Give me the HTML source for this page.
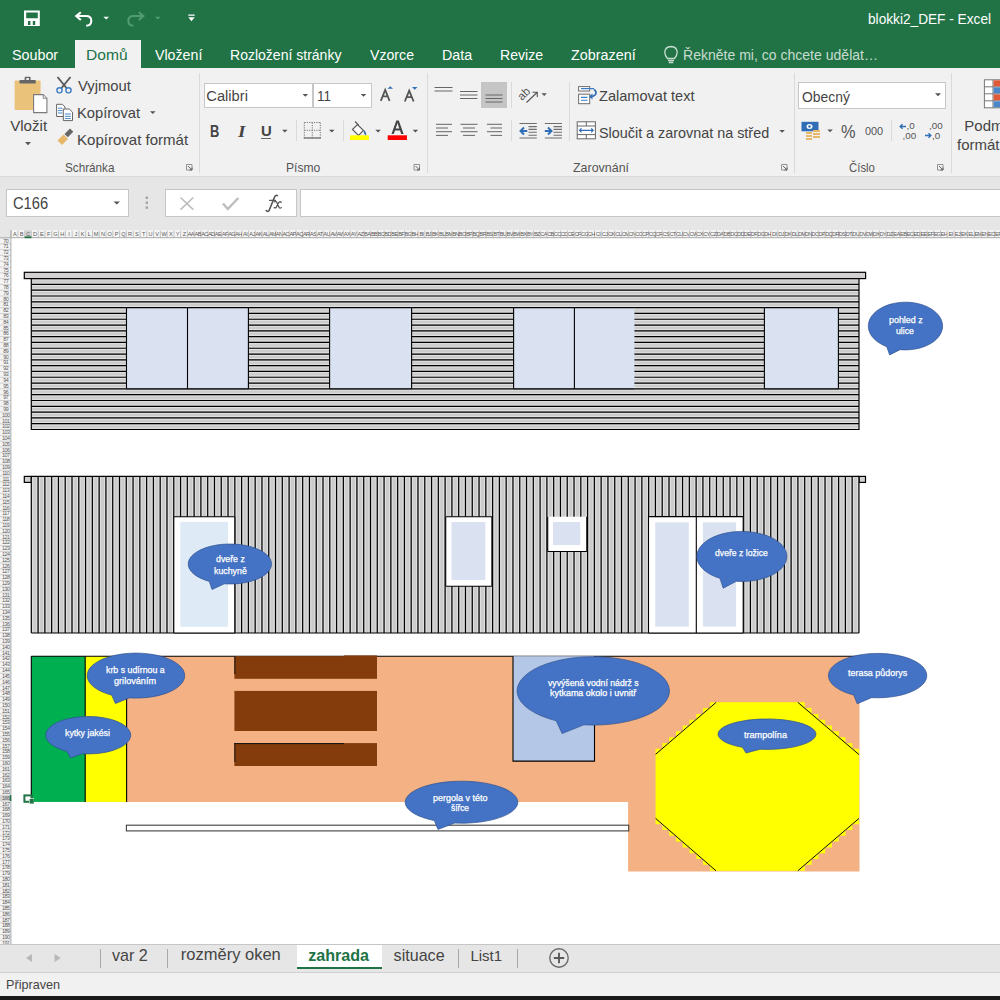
<!DOCTYPE html><html><head><meta charset="utf-8"><style>
html,body{margin:0;padding:0;width:1000px;height:1000px;overflow:hidden;background:#fff;font-family:"Liberation Sans",sans-serif}
.t{position:absolute;white-space:nowrap;line-height:normal}
.r{position:absolute}
svg{position:absolute;left:0;top:0;overflow:visible}
</style></head><body>
<div class="r" style="left:0.00px;top:0.00px;width:1000.00px;height:68.40px;background:#217346;"></div>
<div class="r" style="left:74.80px;top:39.80px;width:66.00px;height:28.60px;background:#f1f1f1;"></div>
<div class="r" style="left:0.00px;top:68.40px;width:1000.00px;height:107.80px;background:#f1f1f1;"></div>
<div class="r" style="left:0.00px;top:175.80px;width:1000.00px;height:1.00px;background:#d9d9d9;"></div>
<div class="r" style="left:0.00px;top:176.80px;width:1000.00px;height:53.20px;background:#e6e6e6;"></div>
<div class="t" style="left:867.70px;top:11.39px;font-size:14.6px;color:#ffffff;font-weight:400;transform:scaleX(0.9364);transform-origin:0 0;">blokki2_DEF - Excel</div>
<svg width="1000" height="40">
<path d="M24 10.6h15.8v15.4H24z M26.2 12.4v5.8h11.6v-5.8z M28 21v4h2.4v-4z M32.8 21v4h2.4v-4z" fill="#fff" fill-rule="evenodd"/>
<path d="M80.8 12.2 L76.2 16 L80.8 20" fill="none" stroke="#fff" stroke-width="2.1" stroke-linejoin="miter"/>
<path d="M76.8 16 H86 Q91.3 16 91.3 20.8 Q91.3 25.6 86.2 25.8" fill="none" stroke="#fff" stroke-width="2.1"/>
<path d="M103.4 16.8h5.6l-2.8 2.8z" fill="#fff"/>
<path d="M138.8 12.2 L143.4 16 L138.8 20" fill="none" stroke="#519c73" stroke-width="2.1"/>
<path d="M142.8 16 H133.6 Q128.3 16 128.3 20.8 Q128.3 25.6 133.4 25.8" fill="none" stroke="#519c73" stroke-width="2.1"/>
<path d="M155 16.8h5.6l-2.8 2.8z" fill="#519c73"/>
<path d="M188.3 14.5h6.4v1.2h-6.4z M188.3 17.2h6.4l-3.2 4z" fill="#fff"/>
</svg>
<div class="t" style="left:12.00px;top:46.06px;font-size:15.4px;color:#ffffff;font-weight:400;transform:scaleX(0.9292);transform-origin:0 0;">Soubor</div>
<div class="t" style="left:86.19px;top:46.06px;font-size:15.4px;color:#217346;font-weight:400;transform:scaleX(1.0128);transform-origin:0 0;">Domů</div>
<div class="t" style="left:155.20px;top:46.06px;font-size:15.4px;color:#ffffff;font-weight:400;transform:scaleX(0.9220);transform-origin:0 0;">Vložení</div>
<div class="t" style="left:230.29px;top:46.06px;font-size:15.4px;color:#ffffff;font-weight:400;transform:scaleX(0.9110);transform-origin:0 0;">Rozložení stránky</div>
<div class="t" style="left:370.20px;top:46.06px;font-size:15.4px;color:#ffffff;font-weight:400;transform:scaleX(0.9189);transform-origin:0 0;">Vzorce</div>
<div class="t" style="left:441.67px;top:46.06px;font-size:15.4px;color:#ffffff;font-weight:400;transform:scaleX(0.9264);transform-origin:0 0;">Data</div>
<div class="t" style="left:500.09px;top:46.06px;font-size:15.4px;color:#ffffff;font-weight:400;transform:scaleX(0.9146);transform-origin:0 0;">Revize</div>
<div class="t" style="left:570.80px;top:46.06px;font-size:15.4px;color:#ffffff;font-weight:400;transform:scaleX(0.9326);transform-origin:0 0;">Zobrazení</div>
<svg width="1000" height="70"><g fill="none" stroke="#c7dccf" stroke-width="1.3"><path d="M667.5 58.5 Q664.8 55.5 664.8 52.3 Q665 46.8 671 46.5 Q677 46.8 677.2 52.3 Q677.2 55.5 674.5 58.5 Z"/><path d="M668 60.5h6 M668.8 62.5h4.4"/></g></svg>
<div class="t" style="left:683.09px;top:46.06px;font-size:15.4px;color:#c7dccf;font-weight:400;transform:scaleX(0.9117);transform-origin:0 0;">Řekněte mi, co chcete udělat…</div>
<div class="r" style="left:198.80px;top:72.50px;width:1.00px;height:100.00px;background:#dadada;"></div>
<div class="r" style="left:426.50px;top:72.50px;width:1.00px;height:100.00px;background:#dadada;"></div>
<div class="r" style="left:794.30px;top:72.50px;width:1.00px;height:100.00px;background:#dadada;"></div>
<div class="r" style="left:950.60px;top:72.50px;width:1.00px;height:100.00px;background:#dadada;"></div>
<div class="r" style="left:296.00px;top:120.00px;width:1.00px;height:21.00px;background:#dadada;"></div>
<div class="r" style="left:342.60px;top:120.00px;width:1.00px;height:21.00px;background:#dadada;"></div>
<div class="r" style="left:511.20px;top:82.00px;width:1.00px;height:26.00px;background:#dadada;"></div>
<div class="r" style="left:511.20px;top:120.00px;width:1.00px;height:21.00px;background:#dadada;"></div>
<div class="r" style="left:569.40px;top:82.00px;width:1.00px;height:59.00px;background:#dadada;"></div>
<div class="r" style="left:890.80px;top:120.00px;width:1.00px;height:21.00px;background:#dadada;"></div>
<svg width="1000" height="180">
<rect x="14.6" y="80.4" width="26" height="29.6" rx="1" fill="#ebc27a"/>
<rect x="19.4" y="80" width="16.4" height="3.6" rx="1" fill="#666"/>
<rect x="24.6" y="76.8" width="6" height="4" rx="1" fill="#666"/><rect x="26.3" y="78" width="2.6" height="2" fill="#f1f1f1"/>
<path d="M33.6 94.6h9.6l3.7 3.7v14.3h-13.3z" fill="#fff" stroke="#7a7a7a" stroke-width="1.1"/>
<path d="M43.2 94.6v3.7h3.7" fill="#ddd" stroke="#7a7a7a" stroke-width="0.8"/>
<path d="M25 142h6l-3 3.2z" fill="#555"/>
<path d="M57.5 77 L66.5 88 M70.5 77 L61.5 88" stroke="#555" stroke-width="1.8" fill="none"/>
<circle cx="59.5" cy="90.3" r="2.6" fill="none" stroke="#3b7bc4" stroke-width="1.4"/><circle cx="68.5" cy="90.3" r="2.6" fill="none" stroke="#3b7bc4" stroke-width="1.4"/>
<path d="M56.6 104.3h5.8l2.6 2.6v9.6h-8.4z" fill="#fff" stroke="#666" stroke-width="1"/>
<path d="M63.3 109h6l3.2 3.2v8.4h-9.2z" fill="#fff" stroke="#666" stroke-width="1"/>
<path d="M58 108.2h4.4 M58 110.6h4.4 M58 113h4.4 M64.8 114h6 M64.8 116.3h6 M64.8 118.6h6" stroke="#4a86c8" stroke-width="1"/>
<path d="M57.5 140.5 L63.5 134.5 L68 139 L62 145 Z" fill="#e8b86a"/>
<path d="M64.5 134 L70 128.5 L73.3 131.8 L67.8 137.3 Z" fill="#666"/>
<path d="M186.5 164.5h5.5v5.5h-5.5z" fill="none" stroke="#888" stroke-width="0.9"/><path d="M188.0 166l4 4 M192.0 167.5v2.5h-2.5" stroke="#666" stroke-width="1" fill="none"/>
<path d="M414 164.5h5.5v5.5h-5.5z" fill="none" stroke="#888" stroke-width="0.9"/><path d="M415.5 166l4 4 M419.5 167.5v2.5h-2.5" stroke="#666" stroke-width="1" fill="none"/>
<path d="M781.5 164.5h5.5v5.5h-5.5z" fill="none" stroke="#888" stroke-width="0.9"/><path d="M783.0 166l4 4 M787.0 167.5v2.5h-2.5" stroke="#666" stroke-width="1" fill="none"/>
<path d="M937.5 164.5h5.5v5.5h-5.5z" fill="none" stroke="#888" stroke-width="0.9"/><path d="M939.0 166l4 4 M943.0 167.5v2.5h-2.5" stroke="#666" stroke-width="1" fill="none"/>
</svg>
<div class="t" style="left:10.20px;top:117.13px;font-size:15.1px;color:#444444;font-weight:400;">Vložit</div>
<div class="t" style="left:78.00px;top:77.81px;font-size:14.8px;color:#444444;font-weight:400;">Vyjmout</div>
<div class="t" style="left:77.00px;top:105.01px;font-size:14.8px;color:#444444;font-weight:400;transform:scaleX(0.9964);transform-origin:0 0;">Kopírovat</div>
<svg width="1000" height="180"><path d="M150 111.3h5.6l-2.8 2.8z" fill="#555"/></svg>
<div class="t" style="left:76.98px;top:132.01px;font-size:14.8px;color:#444444;font-weight:400;transform:scaleX(1.0160);transform-origin:0 0;">Kopírovat formát</div>
<div class="t" style="left:65.00px;top:159.96px;font-size:13.3px;color:#555;font-weight:400;transform:scaleX(0.8806);transform-origin:0 0;">Schránka</div>
<div class="r" style="left:203.9px;top:82.5px;width:109.3px;height:25.8px;background:#fff;border:1px solid #c6c6c6;box-sizing:border-box"></div>
<div class="r" style="left:313.4px;top:82.5px;width:58.3px;height:25.8px;background:#fff;border:1px solid #c6c6c6;box-sizing:border-box"></div>
<div class="t" style="left:206.30px;top:87.50px;font-size:14.7px;color:#444444;font-weight:400;">Calibri</div>
<div class="t" style="left:317.48px;top:87.50px;font-size:14.7px;color:#444444;font-weight:400;transform:scaleX(0.9164);transform-origin:0 0;">11</div>
<svg width="1000" height="180">
<path d="M302.5 94h5.6l-2.8 2.8z M360.7 94h5.6l-2.8 2.8z" fill="#555"/>
<path d="M380.8 100.8 L385.2 89.8 L389.6 100.8 M382.4 96.4 H388" stroke="#555" stroke-width="1.8" fill="none"/>
<path d="M387.5 88.8 L390.2 86.2 L393 88.8 Z" fill="#2f6db5"/>
<path d="M404.8 101.5 L409.2 90.7 L413.6 101.5 M406.4 97.1 H412" stroke="#555" stroke-width="1.8" fill="none"/>
<path d="M412 87 L417.5 87 L414.75 89.75 Z" fill="#2f6db5"/>
<path d="M282 129.8h5.6l-2.8 2.8z M329 129.8h5.6l-2.8 2.8z M375.3 129.8h5.6l-2.8 2.8z M412.6 129.8h5.6l-2.8 2.8z" fill="#555"/>
<g stroke="#777" stroke-width="1" fill="none" stroke-dasharray="1.2 1.2"><path d="M304.3 122.5h16 M304.3 130.3h16 M304.3 122.5v16 M312.3 122.5v16 M320.3 122.5v16"/></g>
<path d="M303.8 138h17" stroke="#666" stroke-width="1.3"/>
<path d="M352.5 129.5 L357.5 124.5 L363.5 130.5 L358.5 135.5 Z" fill="#fff" stroke="#555" stroke-width="1.1"/>
<path d="M355 121.5 L358.5 125" stroke="#555" stroke-width="1.1"/>
<path d="M364 130 Q367 133 366 136 Q364 134 363.5 131z" fill="#2f6db5"/>
<rect x="350" y="135.3" width="19" height="4.7" fill="#ffff00"/>
<path d="M391.5 134 L396.3 120.5 L398.8 120.5 L403.6 134 L401.2 134 L400 130.4 L395 130.4 L393.8 134 Z M395.7 128.4 L399.3 128.4 L397.5 123 Z" fill="#444" fill-rule="evenodd"/>
<rect x="387.7" y="135.3" width="19.3" height="4.7" fill="#ff0000"/>
</svg>
<div class="t" style="left:210.21px;top:121.75px;font-size:16.3px;color:#444;font-weight:700;transform:scaleX(0.7909);transform-origin:0 0;">B</div>
<div class="t" style="left:238.48px;top:121.75px;font-size:16.3px;color:#444;font-weight:700;transform:scaleX(1.1750);transform-origin:0 0;font-style:italic;font-family:'Liberation Serif',serif">I</div>
<div class="t" style="left:260.80px;top:121.77px;font-size:15.5px;color:#444;font-weight:700;transform:scaleX(0.9636);transform-origin:0 0;">U</div>
<div class="r" style="left:260.80px;top:137.60px;width:10.60px;height:1.20px;background:#666;"></div>
<div class="t" style="left:286.09px;top:159.76px;font-size:13.3px;color:#555;font-weight:400;transform:scaleX(0.9094);transform-origin:0 0;">Písmo</div>
<div class="r" style="left:481.20px;top:82.00px;width:25.50px;height:26.40px;background:#c5c5c5;"></div>
<svg width="1000" height="180"><g stroke="#666" stroke-width="1" fill="none">
<path d="M434.5 87.5H452.5 M434.5 91H452.5 "/>
<path d="M460 91.5H477.5 M460 95H477.5 M460 98.5H477.5 "/>
<path d="M485.5 95H502.5 M485.5 98.5H502.5 M485.5 102H502.5 "/>
<path d="M436 124.3H452 M436 128H448 M436 131.7H452 M436 135.4H448"/>
<path d="M460.6 124.3H477.5 M463 128H475 M460.6 131.7H477.5 M463 135.4H475"/>
<path d="M486.9 124.3H502 M490.5 128H502 M486.9 131.7H502 M490.5 135.4H502"/>
</g>
<path d="M519.5 123.5H536.8 M528.5 126.6H536.8 M528.5 129.4H536.8 M528.5 132.3H536.8 M528.5 135.2H536.8 M519.5 138H536.8" stroke="#6e6e6e" stroke-width="1.1"/>
<path d="M544.8 123.5H562 M553.5 126.6H562 M553.5 129.4H562 M553.5 132.3H562 M553.5 135.2H562 M544.8 138H562" stroke="#6e6e6e" stroke-width="1.1"/>
<path d="M527.3 131H521 M524 127.5L520.5 131L524 134.5" stroke="#2f6db5" stroke-width="2" fill="none"/>
<path d="M544.8 131H551 M548 127.5L551.5 131L548 134.5" stroke="#2f6db5" stroke-width="2" fill="none"/>
<text x="0" y="0" font-family="Liberation Sans" font-size="11.5" fill="#555" transform="translate(522 101) rotate(-45)">ab</text>
<path d="M526.5 102.5 L537 92.5 M532.5 92.3h4.8v4.8" stroke="#555" stroke-width="1.1" fill="none"/>
<path d="M541.5 93.3h5.4l-2.7 2.7z M779.3 130h5.6l-2.8 2.8z" fill="#555"/>
<rect x="578.6" y="86.6" width="11.1" height="4.4" fill="#fff" stroke="#6e6e6e" stroke-width="1"/>
<rect x="578.6" y="94.2" width="11.1" height="9.5" fill="#fff" stroke="#6e6e6e" stroke-width="1"/>
<path d="M581 88.6H594 M581 97.4H587.5 M581 100.2H587.5" stroke="#3b7bc4" stroke-width="1.1"/>
<path d="M594 89.5 Q597 91.5 595.5 94.5 Q594 96.5 591 96.5" stroke="#2f6db5" stroke-width="1.7" fill="none"/>
<path d="M592.5 93.5 L589 96.6 L592.5 99.5 Z" fill="#2f6db5"/>
<rect x="577.2" y="121.8" width="18.2" height="17" fill="#fff" stroke="#666" stroke-width="1"/>
<path d="M577.2 126h18.2 M577.2 134.6h18.2 M586.3 121.8v4.2 M586.3 134.6v4.2" stroke="#666" stroke-width="1"/>
<path d="M579.5 130.3h13.6 M581.5 128.3l-2 2 2 2 M591.2 128.3l2 2-2 2" stroke="#2f6db5" stroke-width="1.2" fill="none"/>
</svg>
<div class="t" style="left:599.40px;top:86.92px;font-size:15.0px;color:#444444;font-weight:400;transform:scaleX(0.9707);transform-origin:0 0;">Zalamovat text</div>
<div class="t" style="left:599.40px;top:123.62px;font-size:15.0px;color:#444444;font-weight:400;transform:scaleX(0.9579);transform-origin:0 0;">Sloučit a zarovnat na střed</div>
<div class="t" style="left:573.10px;top:159.96px;font-size:13.3px;color:#555;font-weight:400;transform:scaleX(0.9356);transform-origin:0 0;">Zarovnání</div>
<div class="r" style="left:798.4px;top:82.4px;width:147.4px;height:26.2px;background:#fff;border:1px solid #c6c6c6;box-sizing:border-box"></div>
<div class="t" style="left:801.50px;top:88.12px;font-size:15.0px;color:#444444;font-weight:400;transform:scaleX(0.9254);transform-origin:0 0;">Obecný</div>
<svg width="1000" height="180">
<path d="M935 93.3h6l-3 3z M827.4 129.5h5.4l-2.7 2.7z" fill="#555"/>
<rect x="801.5" y="121.8" width="17" height="9.5" fill="#2f6db5"/><ellipse cx="809.5" cy="126.5" rx="3" ry="2.5" fill="#fff"/><circle cx="809.5" cy="126.5" r="1.2" fill="#2f6db5"/>
<path d="M806 132h6v2h-6z M806 135h6v2h-6z M806 138h6v2h-6z M813 130h7v2h-7z M813 133h7v2h-7z M813 136h7v2h-7z" fill="#e8b86a"/>
<path d="M906 126.5h-5 M902.5 124.3l-2.3 2.2 2.3 2.2" stroke="#2f6db5" stroke-width="1.4" fill="none"/>
<path d="M925 135.5h5 M928.5 133.3l2.3 2.2-2.3 2.2" stroke="#2f6db5" stroke-width="1.4" fill="none"/>
</svg>
<div class="t" style="left:841.40px;top:120.61px;font-size:19.0px;color:#555;font-weight:400;transform:scaleX(0.8588);transform-origin:0 0;">%</div>
<div class="t" style="left:864.50px;top:125.07px;font-size:11.3px;color:#555;font-weight:400;transform:scaleX(0.9641);transform-origin:0 0;">000</div>
<div class="t" style="left:906.50px;top:120.43px;font-size:9.8px;color:#555;font-weight:400;">,0</div>
<div class="t" style="left:902.50px;top:130.43px;font-size:9.8px;color:#555;font-weight:400;">,00</div>
<div class="t" style="left:929.00px;top:120.43px;font-size:9.8px;color:#555;font-weight:400;">,00</div>
<div class="t" style="left:932.00px;top:130.43px;font-size:9.8px;color:#555;font-weight:400;">,0</div>
<div class="t" style="left:849.40px;top:159.96px;font-size:13.3px;color:#555;font-weight:400;transform:scaleX(0.8562);transform-origin:0 0;">Číslo</div>
<svg width="1000" height="180"><rect x="984.4" y="79.8" width="20" height="28" fill="#fff" stroke="#777" stroke-width="1"/>
<path d="M984.4 86.8h20 M984.4 93.8h20 M984.4 100.8h20 M993 79.8v28" stroke="#777" stroke-width="1"/>
<rect x="993.5" y="80.3" width="7" height="6" fill="#e05a3a"/><rect x="993.5" y="87.3" width="7" height="6" fill="#4a86c8"/><rect x="993.5" y="94.3" width="7" height="6" fill="#e05a3a"/><rect x="993.5" y="101.3" width="7" height="6" fill="#4a86c8"/></svg>
<div class="t" style="left:964.30px;top:117.42px;font-size:15.0px;color:#444444;font-weight:400;">Podm</div>
<div class="t" style="left:957.00px;top:136.43px;font-size:15.0px;color:#444444;font-weight:400;">formát</div>
<div class="r" style="left:6.4px;top:189.2px;width:122.2px;height:28.2px;background:#fff;border:1px solid #c6c6c6;box-sizing:border-box"></div>
<div class="t" style="left:12.80px;top:194.52px;font-size:16.0px;color:#444444;font-weight:400;transform:scaleX(0.9178);transform-origin:0 0;">C166</div>
<div class="r" style="left:165.4px;top:189.2px;width:131.6px;height:28.2px;background:#fff;border:1px solid #c6c6c6;box-sizing:border-box"></div>
<div class="r" style="left:300.2px;top:189.2px;width:710px;height:28.2px;background:#fff;border:1px solid #c6c6c6;box-sizing:border-box"></div>
<svg width="1000" height="240">
<path d="M113.6 201.4h6.4l-3.2 3.2z" fill="#555"/>
<rect x="145.6" y="196.6" width="2.4" height="2.4" fill="#a3a3a3"/><rect x="145.6" y="201.5" width="2.4" height="2.4" fill="#a3a3a3"/><rect x="145.6" y="206.4" width="2.4" height="2.4" fill="#a3a3a3"/>
<path d="M180.5 197.5l12.8 12.2 M193.3 197.5L180.5 209.7" stroke="#bdbdbd" stroke-width="1.6"/>
<path d="M223 203.5l4.8 5.5 10.5-11" stroke="#bdbdbd" stroke-width="2.4" fill="none"/>
</svg>
<svg width="1000" height="240"><g fill="none" stroke="#555" stroke-linecap="round"><path d="M266.2 210.6 Q267.6 212.4 269.2 210.2 L274.3 197.6 Q275.4 194.6 277.4 195.6" stroke-width="1.6"/><path d="M269.6 200.4 H275.4" stroke-width="1.2"/><path d="M274.6 201.8 Q276.2 200.8 277.1 203 L278.9 207 Q279.9 209 281.3 207.6 M281.2 202.2 Q279.6 201 278.4 203 L276.6 206.6 Q275.6 208.6 274.2 207.6" stroke-width="1.3"/></g></svg>
<div class="r" style="left:0.00px;top:230.00px;width:1000.00px;height:8.00px;background:#f4f4f4;"></div>
<div class="r" style="left:0.00px;top:230.00px;width:11.10px;height:8.00px;background:#e6e6e6;"></div>
<div class="r" style="left:0.00px;top:238.00px;width:11.10px;height:706.40px;background:#f4f4f4;"></div>
<svg width="1000" height="1000">
<path d="M11.10 230.5V238M17.88 230.5V238M24.67 230.5V238M31.45 230.5V238M38.24 230.5V238M45.02 230.5V238M51.80 230.5V238M58.59 230.5V238M65.37 230.5V238M72.16 230.5V238M78.94 230.5V238M85.72 230.5V238M92.51 230.5V238M99.29 230.5V238M106.08 230.5V238M112.86 230.5V238M119.64 230.5V238M126.43 230.5V238M133.21 230.5V238M140.00 230.5V238M146.78 230.5V238M153.56 230.5V238M160.35 230.5V238M167.13 230.5V238M173.92 230.5V238M180.70 230.5V238M187.48 230.5V238M194.27 230.5V238M201.05 230.5V238M207.84 230.5V238M214.62 230.5V238M221.40 230.5V238M228.19 230.5V238M234.97 230.5V238M241.76 230.5V238M248.54 230.5V238M255.32 230.5V238M262.11 230.5V238M268.89 230.5V238M275.68 230.5V238M282.46 230.5V238M289.24 230.5V238M296.03 230.5V238M302.81 230.5V238M309.60 230.5V238M316.38 230.5V238M323.16 230.5V238M329.95 230.5V238M336.73 230.5V238M343.52 230.5V238M350.30 230.5V238M357.08 230.5V238M363.87 230.5V238M370.65 230.5V238M377.44 230.5V238M384.22 230.5V238M391.00 230.5V238M397.79 230.5V238M404.57 230.5V238M411.36 230.5V238M418.14 230.5V238M424.92 230.5V238M431.71 230.5V238M438.49 230.5V238M445.28 230.5V238M452.06 230.5V238M458.84 230.5V238M465.63 230.5V238M472.41 230.5V238M479.20 230.5V238M485.98 230.5V238M492.76 230.5V238M499.55 230.5V238M506.33 230.5V238M513.12 230.5V238M519.90 230.5V238M526.68 230.5V238M533.47 230.5V238M540.25 230.5V238M547.04 230.5V238M553.82 230.5V238M560.60 230.5V238M567.39 230.5V238M574.17 230.5V238M580.96 230.5V238M587.74 230.5V238M594.52 230.5V238M601.31 230.5V238M608.09 230.5V238M614.88 230.5V238M621.66 230.5V238M628.44 230.5V238M635.23 230.5V238M642.01 230.5V238M648.80 230.5V238M655.58 230.5V238M662.36 230.5V238M669.15 230.5V238M675.93 230.5V238M682.72 230.5V238M689.50 230.5V238M696.28 230.5V238M703.07 230.5V238M709.85 230.5V238M716.64 230.5V238M723.42 230.5V238M730.20 230.5V238M736.99 230.5V238M743.77 230.5V238M750.56 230.5V238M757.34 230.5V238M764.12 230.5V238M770.91 230.5V238M777.69 230.5V238M784.48 230.5V238M791.26 230.5V238M798.04 230.5V238M804.83 230.5V238M811.61 230.5V238M818.40 230.5V238M825.18 230.5V238M831.96 230.5V238M838.75 230.5V238M845.53 230.5V238M852.32 230.5V238M859.10 230.5V238M865.88 230.5V238M872.67 230.5V238M879.45 230.5V238M886.24 230.5V238M893.02 230.5V238M899.80 230.5V238M906.59 230.5V238M913.37 230.5V238M920.16 230.5V238M926.94 230.5V238M933.72 230.5V238M940.51 230.5V238M947.29 230.5V238M954.08 230.5V238M960.86 230.5V238M967.64 230.5V238M974.43 230.5V238M981.21 230.5V238M988.00 230.5V238M994.78 230.5V238" stroke="#bcbcbc" stroke-width="0.9"/>
<rect x="24.67" y="230.2" width="6.78" height="7.8" fill="#d4d4d4"/>
<path d="M0 237.7H1000" stroke="#ababab" stroke-width="1"/>
<rect x="24.67" y="236.4" width="6.78" height="1.8" fill="#217346"/>
<path d="M0 238.00H11.1M0 243.80H11.1M0 249.61H11.1M0 255.41H11.1M0 261.22H11.1M0 267.02H11.1M0 272.82H11.1M0 278.63H11.1M0 284.43H11.1M0 290.24H11.1M0 296.04H11.1M0 301.84H11.1M0 307.65H11.1M0 313.45H11.1M0 319.26H11.1M0 325.06H11.1M0 330.86H11.1M0 336.67H11.1M0 342.47H11.1M0 348.28H11.1M0 354.08H11.1M0 359.88H11.1M0 365.69H11.1M0 371.49H11.1M0 377.30H11.1M0 383.10H11.1M0 388.90H11.1M0 394.71H11.1M0 400.51H11.1M0 406.32H11.1M0 412.12H11.1M0 417.92H11.1M0 423.73H11.1M0 429.53H11.1M0 435.34H11.1M0 441.14H11.1M0 446.94H11.1M0 452.75H11.1M0 458.55H11.1M0 464.36H11.1M0 470.16H11.1M0 475.96H11.1M0 481.77H11.1M0 487.57H11.1M0 493.38H11.1M0 499.18H11.1M0 504.98H11.1M0 510.79H11.1M0 516.59H11.1M0 522.40H11.1M0 528.20H11.1M0 534.00H11.1M0 539.81H11.1M0 545.61H11.1M0 551.42H11.1M0 557.22H11.1M0 563.02H11.1M0 568.83H11.1M0 574.63H11.1M0 580.44H11.1M0 586.24H11.1M0 592.04H11.1M0 597.85H11.1M0 603.65H11.1M0 609.46H11.1M0 615.26H11.1M0 621.06H11.1M0 626.87H11.1M0 632.67H11.1M0 638.48H11.1M0 644.28H11.1M0 650.08H11.1M0 655.89H11.1M0 661.69H11.1M0 667.50H11.1M0 673.30H11.1M0 679.10H11.1M0 684.91H11.1M0 690.71H11.1M0 696.52H11.1M0 702.32H11.1M0 708.12H11.1M0 713.93H11.1M0 719.73H11.1M0 725.54H11.1M0 731.34H11.1M0 737.14H11.1M0 742.95H11.1M0 748.75H11.1M0 754.56H11.1M0 760.36H11.1M0 766.16H11.1M0 771.97H11.1M0 777.77H11.1M0 783.58H11.1M0 789.38H11.1M0 795.18H11.1M0 800.99H11.1M0 806.79H11.1M0 812.60H11.1M0 818.40H11.1M0 824.20H11.1M0 830.01H11.1M0 835.81H11.1M0 841.62H11.1M0 847.42H11.1M0 853.22H11.1M0 859.03H11.1M0 864.83H11.1M0 870.64H11.1M0 876.44H11.1M0 882.24H11.1M0 888.05H11.1M0 893.85H11.1M0 899.66H11.1M0 905.46H11.1M0 911.26H11.1M0 917.07H11.1M0 922.87H11.1M0 928.68H11.1M0 934.48H11.1M0 940.28H11.1" stroke="#c8c8c8" stroke-width="0.8"/>
<path d="M10.90 230V944.4" stroke="#ababab" stroke-width="1"/>
<rect x="0" y="795.18" width="11.10" height="5.80" fill="#d4d4d4"/>
<rect x="9.70" y="795.18" width="1.6" height="5.80" fill="#217346"/>
</svg>
<div style="position:absolute;left:0;top:0;width:1000px;height:238px;overflow:hidden">
<div class="t" style="left:11.10px;width:6.78px;text-align:center;top:230.6px;font-size:5.6px;letter-spacing:-0.6px;color:#5a5a5a;overflow:hidden">A</div>
<div class="t" style="left:17.88px;width:6.78px;text-align:center;top:230.6px;font-size:5.6px;letter-spacing:-0.6px;color:#5a5a5a;overflow:hidden">B</div>
<div class="t" style="left:24.67px;width:6.78px;text-align:center;top:230.6px;font-size:5.6px;letter-spacing:-0.6px;color:#5a5a5a;overflow:hidden">C</div>
<div class="t" style="left:31.45px;width:6.78px;text-align:center;top:230.6px;font-size:5.6px;letter-spacing:-0.6px;color:#5a5a5a;overflow:hidden">D</div>
<div class="t" style="left:38.24px;width:6.78px;text-align:center;top:230.6px;font-size:5.6px;letter-spacing:-0.6px;color:#5a5a5a;overflow:hidden">E</div>
<div class="t" style="left:45.02px;width:6.78px;text-align:center;top:230.6px;font-size:5.6px;letter-spacing:-0.6px;color:#5a5a5a;overflow:hidden">F</div>
<div class="t" style="left:51.80px;width:6.78px;text-align:center;top:230.6px;font-size:5.6px;letter-spacing:-0.6px;color:#5a5a5a;overflow:hidden">G</div>
<div class="t" style="left:58.59px;width:6.78px;text-align:center;top:230.6px;font-size:5.6px;letter-spacing:-0.6px;color:#5a5a5a;overflow:hidden">H</div>
<div class="t" style="left:65.37px;width:6.78px;text-align:center;top:230.6px;font-size:5.6px;letter-spacing:-0.6px;color:#5a5a5a;overflow:hidden">I</div>
<div class="t" style="left:72.16px;width:6.78px;text-align:center;top:230.6px;font-size:5.6px;letter-spacing:-0.6px;color:#5a5a5a;overflow:hidden">J</div>
<div class="t" style="left:78.94px;width:6.78px;text-align:center;top:230.6px;font-size:5.6px;letter-spacing:-0.6px;color:#5a5a5a;overflow:hidden">K</div>
<div class="t" style="left:85.72px;width:6.78px;text-align:center;top:230.6px;font-size:5.6px;letter-spacing:-0.6px;color:#5a5a5a;overflow:hidden">L</div>
<div class="t" style="left:92.51px;width:6.78px;text-align:center;top:230.6px;font-size:5.6px;letter-spacing:-0.6px;color:#5a5a5a;overflow:hidden">M</div>
<div class="t" style="left:99.29px;width:6.78px;text-align:center;top:230.6px;font-size:5.6px;letter-spacing:-0.6px;color:#5a5a5a;overflow:hidden">N</div>
<div class="t" style="left:106.08px;width:6.78px;text-align:center;top:230.6px;font-size:5.6px;letter-spacing:-0.6px;color:#5a5a5a;overflow:hidden">O</div>
<div class="t" style="left:112.86px;width:6.78px;text-align:center;top:230.6px;font-size:5.6px;letter-spacing:-0.6px;color:#5a5a5a;overflow:hidden">P</div>
<div class="t" style="left:119.64px;width:6.78px;text-align:center;top:230.6px;font-size:5.6px;letter-spacing:-0.6px;color:#5a5a5a;overflow:hidden">Q</div>
<div class="t" style="left:126.43px;width:6.78px;text-align:center;top:230.6px;font-size:5.6px;letter-spacing:-0.6px;color:#5a5a5a;overflow:hidden">R</div>
<div class="t" style="left:133.21px;width:6.78px;text-align:center;top:230.6px;font-size:5.6px;letter-spacing:-0.6px;color:#5a5a5a;overflow:hidden">S</div>
<div class="t" style="left:140.00px;width:6.78px;text-align:center;top:230.6px;font-size:5.6px;letter-spacing:-0.6px;color:#5a5a5a;overflow:hidden">T</div>
<div class="t" style="left:146.78px;width:6.78px;text-align:center;top:230.6px;font-size:5.6px;letter-spacing:-0.6px;color:#5a5a5a;overflow:hidden">U</div>
<div class="t" style="left:153.56px;width:6.78px;text-align:center;top:230.6px;font-size:5.6px;letter-spacing:-0.6px;color:#5a5a5a;overflow:hidden">V</div>
<div class="t" style="left:160.35px;width:6.78px;text-align:center;top:230.6px;font-size:5.6px;letter-spacing:-0.6px;color:#5a5a5a;overflow:hidden">W</div>
<div class="t" style="left:167.13px;width:6.78px;text-align:center;top:230.6px;font-size:5.6px;letter-spacing:-0.6px;color:#5a5a5a;overflow:hidden">X</div>
<div class="t" style="left:173.92px;width:6.78px;text-align:center;top:230.6px;font-size:5.6px;letter-spacing:-0.6px;color:#5a5a5a;overflow:hidden">Y</div>
<div class="t" style="left:180.70px;width:6.78px;text-align:center;top:230.6px;font-size:5.6px;letter-spacing:-0.6px;color:#5a5a5a;overflow:hidden">Z</div>
<div class="t" style="left:187.48px;width:6.78px;text-align:center;top:230.6px;font-size:5.6px;letter-spacing:-0.6px;color:#5a5a5a;overflow:hidden">AA</div>
<div class="t" style="left:194.27px;width:6.78px;text-align:center;top:230.6px;font-size:5.6px;letter-spacing:-0.6px;color:#5a5a5a;overflow:hidden">AB</div>
<div class="t" style="left:201.05px;width:6.78px;text-align:center;top:230.6px;font-size:5.6px;letter-spacing:-0.6px;color:#5a5a5a;overflow:hidden">AC</div>
<div class="t" style="left:207.84px;width:6.78px;text-align:center;top:230.6px;font-size:5.6px;letter-spacing:-0.6px;color:#5a5a5a;overflow:hidden">AD</div>
<div class="t" style="left:214.62px;width:6.78px;text-align:center;top:230.6px;font-size:5.6px;letter-spacing:-0.6px;color:#5a5a5a;overflow:hidden">AE</div>
<div class="t" style="left:221.40px;width:6.78px;text-align:center;top:230.6px;font-size:5.6px;letter-spacing:-0.6px;color:#5a5a5a;overflow:hidden">AF</div>
<div class="t" style="left:228.19px;width:6.78px;text-align:center;top:230.6px;font-size:5.6px;letter-spacing:-0.6px;color:#5a5a5a;overflow:hidden">AG</div>
<div class="t" style="left:234.97px;width:6.78px;text-align:center;top:230.6px;font-size:5.6px;letter-spacing:-0.6px;color:#5a5a5a;overflow:hidden">AH</div>
<div class="t" style="left:241.76px;width:6.78px;text-align:center;top:230.6px;font-size:5.6px;letter-spacing:-0.6px;color:#5a5a5a;overflow:hidden">AI</div>
<div class="t" style="left:248.54px;width:6.78px;text-align:center;top:230.6px;font-size:5.6px;letter-spacing:-0.6px;color:#5a5a5a;overflow:hidden">AJ</div>
<div class="t" style="left:255.32px;width:6.78px;text-align:center;top:230.6px;font-size:5.6px;letter-spacing:-0.6px;color:#5a5a5a;overflow:hidden">AK</div>
<div class="t" style="left:262.11px;width:6.78px;text-align:center;top:230.6px;font-size:5.6px;letter-spacing:-0.6px;color:#5a5a5a;overflow:hidden">AL</div>
<div class="t" style="left:268.89px;width:6.78px;text-align:center;top:230.6px;font-size:5.6px;letter-spacing:-0.6px;color:#5a5a5a;overflow:hidden">AM</div>
<div class="t" style="left:275.68px;width:6.78px;text-align:center;top:230.6px;font-size:5.6px;letter-spacing:-0.6px;color:#5a5a5a;overflow:hidden">AN</div>
<div class="t" style="left:282.46px;width:6.78px;text-align:center;top:230.6px;font-size:5.6px;letter-spacing:-0.6px;color:#5a5a5a;overflow:hidden">AO</div>
<div class="t" style="left:289.24px;width:6.78px;text-align:center;top:230.6px;font-size:5.6px;letter-spacing:-0.6px;color:#5a5a5a;overflow:hidden">AP</div>
<div class="t" style="left:296.03px;width:6.78px;text-align:center;top:230.6px;font-size:5.6px;letter-spacing:-0.6px;color:#5a5a5a;overflow:hidden">AQ</div>
<div class="t" style="left:302.81px;width:6.78px;text-align:center;top:230.6px;font-size:5.6px;letter-spacing:-0.6px;color:#5a5a5a;overflow:hidden">AR</div>
<div class="t" style="left:309.60px;width:6.78px;text-align:center;top:230.6px;font-size:5.6px;letter-spacing:-0.6px;color:#5a5a5a;overflow:hidden">AS</div>
<div class="t" style="left:316.38px;width:6.78px;text-align:center;top:230.6px;font-size:5.6px;letter-spacing:-0.6px;color:#5a5a5a;overflow:hidden">AT</div>
<div class="t" style="left:323.16px;width:6.78px;text-align:center;top:230.6px;font-size:5.6px;letter-spacing:-0.6px;color:#5a5a5a;overflow:hidden">AU</div>
<div class="t" style="left:329.95px;width:6.78px;text-align:center;top:230.6px;font-size:5.6px;letter-spacing:-0.6px;color:#5a5a5a;overflow:hidden">AV</div>
<div class="t" style="left:336.73px;width:6.78px;text-align:center;top:230.6px;font-size:5.6px;letter-spacing:-0.6px;color:#5a5a5a;overflow:hidden">AW</div>
<div class="t" style="left:343.52px;width:6.78px;text-align:center;top:230.6px;font-size:5.6px;letter-spacing:-0.6px;color:#5a5a5a;overflow:hidden">AX</div>
<div class="t" style="left:350.30px;width:6.78px;text-align:center;top:230.6px;font-size:5.6px;letter-spacing:-0.6px;color:#5a5a5a;overflow:hidden">AY</div>
<div class="t" style="left:357.08px;width:6.78px;text-align:center;top:230.6px;font-size:5.6px;letter-spacing:-0.6px;color:#5a5a5a;overflow:hidden">AZ</div>
<div class="t" style="left:363.87px;width:6.78px;text-align:center;top:230.6px;font-size:5.6px;letter-spacing:-0.6px;color:#5a5a5a;overflow:hidden">BA</div>
<div class="t" style="left:370.65px;width:6.78px;text-align:center;top:230.6px;font-size:5.6px;letter-spacing:-0.6px;color:#5a5a5a;overflow:hidden">BB</div>
<div class="t" style="left:377.44px;width:6.78px;text-align:center;top:230.6px;font-size:5.6px;letter-spacing:-0.6px;color:#5a5a5a;overflow:hidden">BC</div>
<div class="t" style="left:384.22px;width:6.78px;text-align:center;top:230.6px;font-size:5.6px;letter-spacing:-0.6px;color:#5a5a5a;overflow:hidden">BD</div>
<div class="t" style="left:391.00px;width:6.78px;text-align:center;top:230.6px;font-size:5.6px;letter-spacing:-0.6px;color:#5a5a5a;overflow:hidden">BE</div>
<div class="t" style="left:397.79px;width:6.78px;text-align:center;top:230.6px;font-size:5.6px;letter-spacing:-0.6px;color:#5a5a5a;overflow:hidden">BF</div>
<div class="t" style="left:404.57px;width:6.78px;text-align:center;top:230.6px;font-size:5.6px;letter-spacing:-0.6px;color:#5a5a5a;overflow:hidden">BG</div>
<div class="t" style="left:411.36px;width:6.78px;text-align:center;top:230.6px;font-size:5.6px;letter-spacing:-0.6px;color:#5a5a5a;overflow:hidden">BH</div>
<div class="t" style="left:418.14px;width:6.78px;text-align:center;top:230.6px;font-size:5.6px;letter-spacing:-0.6px;color:#5a5a5a;overflow:hidden">BI</div>
<div class="t" style="left:424.92px;width:6.78px;text-align:center;top:230.6px;font-size:5.6px;letter-spacing:-0.6px;color:#5a5a5a;overflow:hidden">BJ</div>
<div class="t" style="left:431.71px;width:6.78px;text-align:center;top:230.6px;font-size:5.6px;letter-spacing:-0.6px;color:#5a5a5a;overflow:hidden">BK</div>
<div class="t" style="left:438.49px;width:6.78px;text-align:center;top:230.6px;font-size:5.6px;letter-spacing:-0.6px;color:#5a5a5a;overflow:hidden">BL</div>
<div class="t" style="left:445.28px;width:6.78px;text-align:center;top:230.6px;font-size:5.6px;letter-spacing:-0.6px;color:#5a5a5a;overflow:hidden">BM</div>
<div class="t" style="left:452.06px;width:6.78px;text-align:center;top:230.6px;font-size:5.6px;letter-spacing:-0.6px;color:#5a5a5a;overflow:hidden">BN</div>
<div class="t" style="left:458.84px;width:6.78px;text-align:center;top:230.6px;font-size:5.6px;letter-spacing:-0.6px;color:#5a5a5a;overflow:hidden">BO</div>
<div class="t" style="left:465.63px;width:6.78px;text-align:center;top:230.6px;font-size:5.6px;letter-spacing:-0.6px;color:#5a5a5a;overflow:hidden">BP</div>
<div class="t" style="left:472.41px;width:6.78px;text-align:center;top:230.6px;font-size:5.6px;letter-spacing:-0.6px;color:#5a5a5a;overflow:hidden">BQ</div>
<div class="t" style="left:479.20px;width:6.78px;text-align:center;top:230.6px;font-size:5.6px;letter-spacing:-0.6px;color:#5a5a5a;overflow:hidden">BR</div>
<div class="t" style="left:485.98px;width:6.78px;text-align:center;top:230.6px;font-size:5.6px;letter-spacing:-0.6px;color:#5a5a5a;overflow:hidden">BS</div>
<div class="t" style="left:492.76px;width:6.78px;text-align:center;top:230.6px;font-size:5.6px;letter-spacing:-0.6px;color:#5a5a5a;overflow:hidden">BT</div>
<div class="t" style="left:499.55px;width:6.78px;text-align:center;top:230.6px;font-size:5.6px;letter-spacing:-0.6px;color:#5a5a5a;overflow:hidden">BU</div>
<div class="t" style="left:506.33px;width:6.78px;text-align:center;top:230.6px;font-size:5.6px;letter-spacing:-0.6px;color:#5a5a5a;overflow:hidden">BV</div>
<div class="t" style="left:513.12px;width:6.78px;text-align:center;top:230.6px;font-size:5.6px;letter-spacing:-0.6px;color:#5a5a5a;overflow:hidden">BW</div>
<div class="t" style="left:519.90px;width:6.78px;text-align:center;top:230.6px;font-size:5.6px;letter-spacing:-0.6px;color:#5a5a5a;overflow:hidden">BX</div>
<div class="t" style="left:526.68px;width:6.78px;text-align:center;top:230.6px;font-size:5.6px;letter-spacing:-0.6px;color:#5a5a5a;overflow:hidden">BY</div>
<div class="t" style="left:533.47px;width:6.78px;text-align:center;top:230.6px;font-size:5.6px;letter-spacing:-0.6px;color:#5a5a5a;overflow:hidden">BZ</div>
<div class="t" style="left:540.25px;width:6.78px;text-align:center;top:230.6px;font-size:5.6px;letter-spacing:-0.6px;color:#5a5a5a;overflow:hidden">CA</div>
<div class="t" style="left:547.04px;width:6.78px;text-align:center;top:230.6px;font-size:5.6px;letter-spacing:-0.6px;color:#5a5a5a;overflow:hidden">CB</div>
<div class="t" style="left:553.82px;width:6.78px;text-align:center;top:230.6px;font-size:5.6px;letter-spacing:-0.6px;color:#5a5a5a;overflow:hidden">CC</div>
<div class="t" style="left:560.60px;width:6.78px;text-align:center;top:230.6px;font-size:5.6px;letter-spacing:-0.6px;color:#5a5a5a;overflow:hidden">CD</div>
<div class="t" style="left:567.39px;width:6.78px;text-align:center;top:230.6px;font-size:5.6px;letter-spacing:-0.6px;color:#5a5a5a;overflow:hidden">CE</div>
<div class="t" style="left:574.17px;width:6.78px;text-align:center;top:230.6px;font-size:5.6px;letter-spacing:-0.6px;color:#5a5a5a;overflow:hidden">CF</div>
<div class="t" style="left:580.96px;width:6.78px;text-align:center;top:230.6px;font-size:5.6px;letter-spacing:-0.6px;color:#5a5a5a;overflow:hidden">CG</div>
<div class="t" style="left:587.74px;width:6.78px;text-align:center;top:230.6px;font-size:5.6px;letter-spacing:-0.6px;color:#5a5a5a;overflow:hidden">CH</div>
<div class="t" style="left:594.52px;width:6.78px;text-align:center;top:230.6px;font-size:5.6px;letter-spacing:-0.6px;color:#5a5a5a;overflow:hidden">CI</div>
<div class="t" style="left:601.31px;width:6.78px;text-align:center;top:230.6px;font-size:5.6px;letter-spacing:-0.6px;color:#5a5a5a;overflow:hidden">CJ</div>
<div class="t" style="left:608.09px;width:6.78px;text-align:center;top:230.6px;font-size:5.6px;letter-spacing:-0.6px;color:#5a5a5a;overflow:hidden">CK</div>
<div class="t" style="left:614.88px;width:6.78px;text-align:center;top:230.6px;font-size:5.6px;letter-spacing:-0.6px;color:#5a5a5a;overflow:hidden">CL</div>
<div class="t" style="left:621.66px;width:6.78px;text-align:center;top:230.6px;font-size:5.6px;letter-spacing:-0.6px;color:#5a5a5a;overflow:hidden">CM</div>
<div class="t" style="left:628.44px;width:6.78px;text-align:center;top:230.6px;font-size:5.6px;letter-spacing:-0.6px;color:#5a5a5a;overflow:hidden">CN</div>
<div class="t" style="left:635.23px;width:6.78px;text-align:center;top:230.6px;font-size:5.6px;letter-spacing:-0.6px;color:#5a5a5a;overflow:hidden">CO</div>
<div class="t" style="left:642.01px;width:6.78px;text-align:center;top:230.6px;font-size:5.6px;letter-spacing:-0.6px;color:#5a5a5a;overflow:hidden">CP</div>
<div class="t" style="left:648.80px;width:6.78px;text-align:center;top:230.6px;font-size:5.6px;letter-spacing:-0.6px;color:#5a5a5a;overflow:hidden">CQ</div>
<div class="t" style="left:655.58px;width:6.78px;text-align:center;top:230.6px;font-size:5.6px;letter-spacing:-0.6px;color:#5a5a5a;overflow:hidden">CR</div>
<div class="t" style="left:662.36px;width:6.78px;text-align:center;top:230.6px;font-size:5.6px;letter-spacing:-0.6px;color:#5a5a5a;overflow:hidden">CS</div>
<div class="t" style="left:669.15px;width:6.78px;text-align:center;top:230.6px;font-size:5.6px;letter-spacing:-0.6px;color:#5a5a5a;overflow:hidden">CT</div>
<div class="t" style="left:675.93px;width:6.78px;text-align:center;top:230.6px;font-size:5.6px;letter-spacing:-0.6px;color:#5a5a5a;overflow:hidden">CU</div>
<div class="t" style="left:682.72px;width:6.78px;text-align:center;top:230.6px;font-size:5.6px;letter-spacing:-0.6px;color:#5a5a5a;overflow:hidden">CV</div>
<div class="t" style="left:689.50px;width:6.78px;text-align:center;top:230.6px;font-size:5.6px;letter-spacing:-0.6px;color:#5a5a5a;overflow:hidden">CW</div>
<div class="t" style="left:696.28px;width:6.78px;text-align:center;top:230.6px;font-size:5.6px;letter-spacing:-0.6px;color:#5a5a5a;overflow:hidden">CX</div>
<div class="t" style="left:703.07px;width:6.78px;text-align:center;top:230.6px;font-size:5.6px;letter-spacing:-0.6px;color:#5a5a5a;overflow:hidden">CY</div>
<div class="t" style="left:709.85px;width:6.78px;text-align:center;top:230.6px;font-size:5.6px;letter-spacing:-0.6px;color:#5a5a5a;overflow:hidden">CZ</div>
<div class="t" style="left:716.64px;width:6.78px;text-align:center;top:230.6px;font-size:5.6px;letter-spacing:-0.6px;color:#5a5a5a;overflow:hidden">DA</div>
<div class="t" style="left:723.42px;width:6.78px;text-align:center;top:230.6px;font-size:5.6px;letter-spacing:-0.6px;color:#5a5a5a;overflow:hidden">DB</div>
<div class="t" style="left:730.20px;width:6.78px;text-align:center;top:230.6px;font-size:5.6px;letter-spacing:-0.6px;color:#5a5a5a;overflow:hidden">DC</div>
<div class="t" style="left:736.99px;width:6.78px;text-align:center;top:230.6px;font-size:5.6px;letter-spacing:-0.6px;color:#5a5a5a;overflow:hidden">DD</div>
<div class="t" style="left:743.77px;width:6.78px;text-align:center;top:230.6px;font-size:5.6px;letter-spacing:-0.6px;color:#5a5a5a;overflow:hidden">DE</div>
<div class="t" style="left:750.56px;width:6.78px;text-align:center;top:230.6px;font-size:5.6px;letter-spacing:-0.6px;color:#5a5a5a;overflow:hidden">DF</div>
<div class="t" style="left:757.34px;width:6.78px;text-align:center;top:230.6px;font-size:5.6px;letter-spacing:-0.6px;color:#5a5a5a;overflow:hidden">DG</div>
<div class="t" style="left:764.12px;width:6.78px;text-align:center;top:230.6px;font-size:5.6px;letter-spacing:-0.6px;color:#5a5a5a;overflow:hidden">DH</div>
<div class="t" style="left:770.91px;width:6.78px;text-align:center;top:230.6px;font-size:5.6px;letter-spacing:-0.6px;color:#5a5a5a;overflow:hidden">DI</div>
<div class="t" style="left:777.69px;width:6.78px;text-align:center;top:230.6px;font-size:5.6px;letter-spacing:-0.6px;color:#5a5a5a;overflow:hidden">DJ</div>
<div class="t" style="left:784.48px;width:6.78px;text-align:center;top:230.6px;font-size:5.6px;letter-spacing:-0.6px;color:#5a5a5a;overflow:hidden">DK</div>
<div class="t" style="left:791.26px;width:6.78px;text-align:center;top:230.6px;font-size:5.6px;letter-spacing:-0.6px;color:#5a5a5a;overflow:hidden">DL</div>
<div class="t" style="left:798.04px;width:6.78px;text-align:center;top:230.6px;font-size:5.6px;letter-spacing:-0.6px;color:#5a5a5a;overflow:hidden">DM</div>
<div class="t" style="left:804.83px;width:6.78px;text-align:center;top:230.6px;font-size:5.6px;letter-spacing:-0.6px;color:#5a5a5a;overflow:hidden">DN</div>
<div class="t" style="left:811.61px;width:6.78px;text-align:center;top:230.6px;font-size:5.6px;letter-spacing:-0.6px;color:#5a5a5a;overflow:hidden">DO</div>
<div class="t" style="left:818.40px;width:6.78px;text-align:center;top:230.6px;font-size:5.6px;letter-spacing:-0.6px;color:#5a5a5a;overflow:hidden">DP</div>
<div class="t" style="left:825.18px;width:6.78px;text-align:center;top:230.6px;font-size:5.6px;letter-spacing:-0.6px;color:#5a5a5a;overflow:hidden">DQ</div>
<div class="t" style="left:831.96px;width:6.78px;text-align:center;top:230.6px;font-size:5.6px;letter-spacing:-0.6px;color:#5a5a5a;overflow:hidden">DR</div>
<div class="t" style="left:838.75px;width:6.78px;text-align:center;top:230.6px;font-size:5.6px;letter-spacing:-0.6px;color:#5a5a5a;overflow:hidden">DS</div>
<div class="t" style="left:845.53px;width:6.78px;text-align:center;top:230.6px;font-size:5.6px;letter-spacing:-0.6px;color:#5a5a5a;overflow:hidden">DT</div>
<div class="t" style="left:852.32px;width:6.78px;text-align:center;top:230.6px;font-size:5.6px;letter-spacing:-0.6px;color:#5a5a5a;overflow:hidden">DU</div>
<div class="t" style="left:859.10px;width:6.78px;text-align:center;top:230.6px;font-size:5.6px;letter-spacing:-0.6px;color:#5a5a5a;overflow:hidden">DV</div>
<div class="t" style="left:865.88px;width:6.78px;text-align:center;top:230.6px;font-size:5.6px;letter-spacing:-0.6px;color:#5a5a5a;overflow:hidden">DW</div>
<div class="t" style="left:872.67px;width:6.78px;text-align:center;top:230.6px;font-size:5.6px;letter-spacing:-0.6px;color:#5a5a5a;overflow:hidden">DX</div>
<div class="t" style="left:879.45px;width:6.78px;text-align:center;top:230.6px;font-size:5.6px;letter-spacing:-0.6px;color:#5a5a5a;overflow:hidden">DY</div>
<div class="t" style="left:886.24px;width:6.78px;text-align:center;top:230.6px;font-size:5.6px;letter-spacing:-0.6px;color:#5a5a5a;overflow:hidden">DZ</div>
<div class="t" style="left:893.02px;width:6.78px;text-align:center;top:230.6px;font-size:5.6px;letter-spacing:-0.6px;color:#5a5a5a;overflow:hidden">EA</div>
<div class="t" style="left:899.80px;width:6.78px;text-align:center;top:230.6px;font-size:5.6px;letter-spacing:-0.6px;color:#5a5a5a;overflow:hidden">EB</div>
<div class="t" style="left:906.59px;width:6.78px;text-align:center;top:230.6px;font-size:5.6px;letter-spacing:-0.6px;color:#5a5a5a;overflow:hidden">EC</div>
<div class="t" style="left:913.37px;width:6.78px;text-align:center;top:230.6px;font-size:5.6px;letter-spacing:-0.6px;color:#5a5a5a;overflow:hidden">ED</div>
<div class="t" style="left:920.16px;width:6.78px;text-align:center;top:230.6px;font-size:5.6px;letter-spacing:-0.6px;color:#5a5a5a;overflow:hidden">EE</div>
<div class="t" style="left:926.94px;width:6.78px;text-align:center;top:230.6px;font-size:5.6px;letter-spacing:-0.6px;color:#5a5a5a;overflow:hidden">EF</div>
<div class="t" style="left:933.72px;width:6.78px;text-align:center;top:230.6px;font-size:5.6px;letter-spacing:-0.6px;color:#5a5a5a;overflow:hidden">EG</div>
<div class="t" style="left:940.51px;width:6.78px;text-align:center;top:230.6px;font-size:5.6px;letter-spacing:-0.6px;color:#5a5a5a;overflow:hidden">EH</div>
<div class="t" style="left:947.29px;width:6.78px;text-align:center;top:230.6px;font-size:5.6px;letter-spacing:-0.6px;color:#5a5a5a;overflow:hidden">EI</div>
<div class="t" style="left:954.08px;width:6.78px;text-align:center;top:230.6px;font-size:5.6px;letter-spacing:-0.6px;color:#5a5a5a;overflow:hidden">EJ</div>
<div class="t" style="left:960.86px;width:6.78px;text-align:center;top:230.6px;font-size:5.6px;letter-spacing:-0.6px;color:#5a5a5a;overflow:hidden">EK</div>
<div class="t" style="left:967.64px;width:6.78px;text-align:center;top:230.6px;font-size:5.6px;letter-spacing:-0.6px;color:#5a5a5a;overflow:hidden">EL</div>
<div class="t" style="left:974.43px;width:6.78px;text-align:center;top:230.6px;font-size:5.6px;letter-spacing:-0.6px;color:#5a5a5a;overflow:hidden">EM</div>
<div class="t" style="left:981.21px;width:6.78px;text-align:center;top:230.6px;font-size:5.6px;letter-spacing:-0.6px;color:#5a5a5a;overflow:hidden">EN</div>
<div class="t" style="left:988.00px;width:6.78px;text-align:center;top:230.6px;font-size:5.6px;letter-spacing:-0.6px;color:#5a5a5a;overflow:hidden">EO</div>
<div class="t" style="left:994.78px;width:6.78px;text-align:center;top:230.6px;font-size:5.6px;letter-spacing:-0.6px;color:#5a5a5a;overflow:hidden">EP</div>
</div>
<div style="position:absolute;left:0;top:238px;width:11px;height:706px;overflow:hidden">
<div class="t" style="left:1px;width:9.5px;text-align:center;top:-0.40px;font-size:5.4px;letter-spacing:-0.5px;color:#5a5a5a">70</div>
<div class="t" style="left:1px;width:9.5px;text-align:center;top:5.40px;font-size:5.4px;letter-spacing:-0.5px;color:#5a5a5a">71</div>
<div class="t" style="left:1px;width:9.5px;text-align:center;top:11.21px;font-size:5.4px;letter-spacing:-0.5px;color:#5a5a5a">72</div>
<div class="t" style="left:1px;width:9.5px;text-align:center;top:17.01px;font-size:5.4px;letter-spacing:-0.5px;color:#5a5a5a">73</div>
<div class="t" style="left:1px;width:9.5px;text-align:center;top:22.82px;font-size:5.4px;letter-spacing:-0.5px;color:#5a5a5a">74</div>
<div class="t" style="left:1px;width:9.5px;text-align:center;top:28.62px;font-size:5.4px;letter-spacing:-0.5px;color:#5a5a5a">75</div>
<div class="t" style="left:1px;width:9.5px;text-align:center;top:34.42px;font-size:5.4px;letter-spacing:-0.5px;color:#5a5a5a">76</div>
<div class="t" style="left:1px;width:9.5px;text-align:center;top:40.23px;font-size:5.4px;letter-spacing:-0.5px;color:#5a5a5a">77</div>
<div class="t" style="left:1px;width:9.5px;text-align:center;top:46.03px;font-size:5.4px;letter-spacing:-0.5px;color:#5a5a5a">78</div>
<div class="t" style="left:1px;width:9.5px;text-align:center;top:51.84px;font-size:5.4px;letter-spacing:-0.5px;color:#5a5a5a">79</div>
<div class="t" style="left:1px;width:9.5px;text-align:center;top:57.64px;font-size:5.4px;letter-spacing:-0.5px;color:#5a5a5a">80</div>
<div class="t" style="left:1px;width:9.5px;text-align:center;top:63.44px;font-size:5.4px;letter-spacing:-0.5px;color:#5a5a5a">81</div>
<div class="t" style="left:1px;width:9.5px;text-align:center;top:69.25px;font-size:5.4px;letter-spacing:-0.5px;color:#5a5a5a">82</div>
<div class="t" style="left:1px;width:9.5px;text-align:center;top:75.05px;font-size:5.4px;letter-spacing:-0.5px;color:#5a5a5a">83</div>
<div class="t" style="left:1px;width:9.5px;text-align:center;top:80.86px;font-size:5.4px;letter-spacing:-0.5px;color:#5a5a5a">84</div>
<div class="t" style="left:1px;width:9.5px;text-align:center;top:86.66px;font-size:5.4px;letter-spacing:-0.5px;color:#5a5a5a">85</div>
<div class="t" style="left:1px;width:9.5px;text-align:center;top:92.46px;font-size:5.4px;letter-spacing:-0.5px;color:#5a5a5a">86</div>
<div class="t" style="left:1px;width:9.5px;text-align:center;top:98.27px;font-size:5.4px;letter-spacing:-0.5px;color:#5a5a5a">87</div>
<div class="t" style="left:1px;width:9.5px;text-align:center;top:104.07px;font-size:5.4px;letter-spacing:-0.5px;color:#5a5a5a">88</div>
<div class="t" style="left:1px;width:9.5px;text-align:center;top:109.88px;font-size:5.4px;letter-spacing:-0.5px;color:#5a5a5a">89</div>
<div class="t" style="left:1px;width:9.5px;text-align:center;top:115.68px;font-size:5.4px;letter-spacing:-0.5px;color:#5a5a5a">90</div>
<div class="t" style="left:1px;width:9.5px;text-align:center;top:121.48px;font-size:5.4px;letter-spacing:-0.5px;color:#5a5a5a">91</div>
<div class="t" style="left:1px;width:9.5px;text-align:center;top:127.29px;font-size:5.4px;letter-spacing:-0.5px;color:#5a5a5a">92</div>
<div class="t" style="left:1px;width:9.5px;text-align:center;top:133.09px;font-size:5.4px;letter-spacing:-0.5px;color:#5a5a5a">93</div>
<div class="t" style="left:1px;width:9.5px;text-align:center;top:138.90px;font-size:5.4px;letter-spacing:-0.5px;color:#5a5a5a">94</div>
<div class="t" style="left:1px;width:9.5px;text-align:center;top:144.70px;font-size:5.4px;letter-spacing:-0.5px;color:#5a5a5a">95</div>
<div class="t" style="left:1px;width:9.5px;text-align:center;top:150.50px;font-size:5.4px;letter-spacing:-0.5px;color:#5a5a5a">96</div>
<div class="t" style="left:1px;width:9.5px;text-align:center;top:156.31px;font-size:5.4px;letter-spacing:-0.5px;color:#5a5a5a">97</div>
<div class="t" style="left:1px;width:9.5px;text-align:center;top:162.11px;font-size:5.4px;letter-spacing:-0.5px;color:#5a5a5a">98</div>
<div class="t" style="left:1px;width:9.5px;text-align:center;top:167.92px;font-size:5.4px;letter-spacing:-0.5px;color:#5a5a5a">99</div>
<div class="t" style="left:1px;width:9.5px;text-align:center;top:173.72px;font-size:5.4px;letter-spacing:-0.5px;color:#5a5a5a">100</div>
<div class="t" style="left:1px;width:9.5px;text-align:center;top:179.52px;font-size:5.4px;letter-spacing:-0.5px;color:#5a5a5a">101</div>
<div class="t" style="left:1px;width:9.5px;text-align:center;top:185.33px;font-size:5.4px;letter-spacing:-0.5px;color:#5a5a5a">102</div>
<div class="t" style="left:1px;width:9.5px;text-align:center;top:191.13px;font-size:5.4px;letter-spacing:-0.5px;color:#5a5a5a">103</div>
<div class="t" style="left:1px;width:9.5px;text-align:center;top:196.94px;font-size:5.4px;letter-spacing:-0.5px;color:#5a5a5a">104</div>
<div class="t" style="left:1px;width:9.5px;text-align:center;top:202.74px;font-size:5.4px;letter-spacing:-0.5px;color:#5a5a5a">105</div>
<div class="t" style="left:1px;width:9.5px;text-align:center;top:208.54px;font-size:5.4px;letter-spacing:-0.5px;color:#5a5a5a">106</div>
<div class="t" style="left:1px;width:9.5px;text-align:center;top:214.35px;font-size:5.4px;letter-spacing:-0.5px;color:#5a5a5a">107</div>
<div class="t" style="left:1px;width:9.5px;text-align:center;top:220.15px;font-size:5.4px;letter-spacing:-0.5px;color:#5a5a5a">108</div>
<div class="t" style="left:1px;width:9.5px;text-align:center;top:225.96px;font-size:5.4px;letter-spacing:-0.5px;color:#5a5a5a">109</div>
<div class="t" style="left:1px;width:9.5px;text-align:center;top:231.76px;font-size:5.4px;letter-spacing:-0.5px;color:#5a5a5a">110</div>
<div class="t" style="left:1px;width:9.5px;text-align:center;top:237.56px;font-size:5.4px;letter-spacing:-0.5px;color:#5a5a5a">111</div>
<div class="t" style="left:1px;width:9.5px;text-align:center;top:243.37px;font-size:5.4px;letter-spacing:-0.5px;color:#5a5a5a">112</div>
<div class="t" style="left:1px;width:9.5px;text-align:center;top:249.17px;font-size:5.4px;letter-spacing:-0.5px;color:#5a5a5a">113</div>
<div class="t" style="left:1px;width:9.5px;text-align:center;top:254.98px;font-size:5.4px;letter-spacing:-0.5px;color:#5a5a5a">114</div>
<div class="t" style="left:1px;width:9.5px;text-align:center;top:260.78px;font-size:5.4px;letter-spacing:-0.5px;color:#5a5a5a">115</div>
<div class="t" style="left:1px;width:9.5px;text-align:center;top:266.58px;font-size:5.4px;letter-spacing:-0.5px;color:#5a5a5a">116</div>
<div class="t" style="left:1px;width:9.5px;text-align:center;top:272.39px;font-size:5.4px;letter-spacing:-0.5px;color:#5a5a5a">117</div>
<div class="t" style="left:1px;width:9.5px;text-align:center;top:278.19px;font-size:5.4px;letter-spacing:-0.5px;color:#5a5a5a">118</div>
<div class="t" style="left:1px;width:9.5px;text-align:center;top:284.00px;font-size:5.4px;letter-spacing:-0.5px;color:#5a5a5a">119</div>
<div class="t" style="left:1px;width:9.5px;text-align:center;top:289.80px;font-size:5.4px;letter-spacing:-0.5px;color:#5a5a5a">120</div>
<div class="t" style="left:1px;width:9.5px;text-align:center;top:295.60px;font-size:5.4px;letter-spacing:-0.5px;color:#5a5a5a">121</div>
<div class="t" style="left:1px;width:9.5px;text-align:center;top:301.41px;font-size:5.4px;letter-spacing:-0.5px;color:#5a5a5a">122</div>
<div class="t" style="left:1px;width:9.5px;text-align:center;top:307.21px;font-size:5.4px;letter-spacing:-0.5px;color:#5a5a5a">123</div>
<div class="t" style="left:1px;width:9.5px;text-align:center;top:313.02px;font-size:5.4px;letter-spacing:-0.5px;color:#5a5a5a">124</div>
<div class="t" style="left:1px;width:9.5px;text-align:center;top:318.82px;font-size:5.4px;letter-spacing:-0.5px;color:#5a5a5a">125</div>
<div class="t" style="left:1px;width:9.5px;text-align:center;top:324.62px;font-size:5.4px;letter-spacing:-0.5px;color:#5a5a5a">126</div>
<div class="t" style="left:1px;width:9.5px;text-align:center;top:330.43px;font-size:5.4px;letter-spacing:-0.5px;color:#5a5a5a">127</div>
<div class="t" style="left:1px;width:9.5px;text-align:center;top:336.23px;font-size:5.4px;letter-spacing:-0.5px;color:#5a5a5a">128</div>
<div class="t" style="left:1px;width:9.5px;text-align:center;top:342.04px;font-size:5.4px;letter-spacing:-0.5px;color:#5a5a5a">129</div>
<div class="t" style="left:1px;width:9.5px;text-align:center;top:347.84px;font-size:5.4px;letter-spacing:-0.5px;color:#5a5a5a">130</div>
<div class="t" style="left:1px;width:9.5px;text-align:center;top:353.64px;font-size:5.4px;letter-spacing:-0.5px;color:#5a5a5a">131</div>
<div class="t" style="left:1px;width:9.5px;text-align:center;top:359.45px;font-size:5.4px;letter-spacing:-0.5px;color:#5a5a5a">132</div>
<div class="t" style="left:1px;width:9.5px;text-align:center;top:365.25px;font-size:5.4px;letter-spacing:-0.5px;color:#5a5a5a">133</div>
<div class="t" style="left:1px;width:9.5px;text-align:center;top:371.06px;font-size:5.4px;letter-spacing:-0.5px;color:#5a5a5a">134</div>
<div class="t" style="left:1px;width:9.5px;text-align:center;top:376.86px;font-size:5.4px;letter-spacing:-0.5px;color:#5a5a5a">135</div>
<div class="t" style="left:1px;width:9.5px;text-align:center;top:382.66px;font-size:5.4px;letter-spacing:-0.5px;color:#5a5a5a">136</div>
<div class="t" style="left:1px;width:9.5px;text-align:center;top:388.47px;font-size:5.4px;letter-spacing:-0.5px;color:#5a5a5a">137</div>
<div class="t" style="left:1px;width:9.5px;text-align:center;top:394.27px;font-size:5.4px;letter-spacing:-0.5px;color:#5a5a5a">138</div>
<div class="t" style="left:1px;width:9.5px;text-align:center;top:400.08px;font-size:5.4px;letter-spacing:-0.5px;color:#5a5a5a">139</div>
<div class="t" style="left:1px;width:9.5px;text-align:center;top:405.88px;font-size:5.4px;letter-spacing:-0.5px;color:#5a5a5a">140</div>
<div class="t" style="left:1px;width:9.5px;text-align:center;top:411.68px;font-size:5.4px;letter-spacing:-0.5px;color:#5a5a5a">141</div>
<div class="t" style="left:1px;width:9.5px;text-align:center;top:417.49px;font-size:5.4px;letter-spacing:-0.5px;color:#5a5a5a">142</div>
<div class="t" style="left:1px;width:9.5px;text-align:center;top:423.29px;font-size:5.4px;letter-spacing:-0.5px;color:#5a5a5a">143</div>
<div class="t" style="left:1px;width:9.5px;text-align:center;top:429.10px;font-size:5.4px;letter-spacing:-0.5px;color:#5a5a5a">144</div>
<div class="t" style="left:1px;width:9.5px;text-align:center;top:434.90px;font-size:5.4px;letter-spacing:-0.5px;color:#5a5a5a">145</div>
<div class="t" style="left:1px;width:9.5px;text-align:center;top:440.70px;font-size:5.4px;letter-spacing:-0.5px;color:#5a5a5a">146</div>
<div class="t" style="left:1px;width:9.5px;text-align:center;top:446.51px;font-size:5.4px;letter-spacing:-0.5px;color:#5a5a5a">147</div>
<div class="t" style="left:1px;width:9.5px;text-align:center;top:452.31px;font-size:5.4px;letter-spacing:-0.5px;color:#5a5a5a">148</div>
<div class="t" style="left:1px;width:9.5px;text-align:center;top:458.12px;font-size:5.4px;letter-spacing:-0.5px;color:#5a5a5a">149</div>
<div class="t" style="left:1px;width:9.5px;text-align:center;top:463.92px;font-size:5.4px;letter-spacing:-0.5px;color:#5a5a5a">150</div>
<div class="t" style="left:1px;width:9.5px;text-align:center;top:469.72px;font-size:5.4px;letter-spacing:-0.5px;color:#5a5a5a">151</div>
<div class="t" style="left:1px;width:9.5px;text-align:center;top:475.53px;font-size:5.4px;letter-spacing:-0.5px;color:#5a5a5a">152</div>
<div class="t" style="left:1px;width:9.5px;text-align:center;top:481.33px;font-size:5.4px;letter-spacing:-0.5px;color:#5a5a5a">153</div>
<div class="t" style="left:1px;width:9.5px;text-align:center;top:487.14px;font-size:5.4px;letter-spacing:-0.5px;color:#5a5a5a">154</div>
<div class="t" style="left:1px;width:9.5px;text-align:center;top:492.94px;font-size:5.4px;letter-spacing:-0.5px;color:#5a5a5a">155</div>
<div class="t" style="left:1px;width:9.5px;text-align:center;top:498.74px;font-size:5.4px;letter-spacing:-0.5px;color:#5a5a5a">156</div>
<div class="t" style="left:1px;width:9.5px;text-align:center;top:504.55px;font-size:5.4px;letter-spacing:-0.5px;color:#5a5a5a">157</div>
<div class="t" style="left:1px;width:9.5px;text-align:center;top:510.35px;font-size:5.4px;letter-spacing:-0.5px;color:#5a5a5a">158</div>
<div class="t" style="left:1px;width:9.5px;text-align:center;top:516.16px;font-size:5.4px;letter-spacing:-0.5px;color:#5a5a5a">159</div>
<div class="t" style="left:1px;width:9.5px;text-align:center;top:521.96px;font-size:5.4px;letter-spacing:-0.5px;color:#5a5a5a">160</div>
<div class="t" style="left:1px;width:9.5px;text-align:center;top:527.76px;font-size:5.4px;letter-spacing:-0.5px;color:#5a5a5a">161</div>
<div class="t" style="left:1px;width:9.5px;text-align:center;top:533.57px;font-size:5.4px;letter-spacing:-0.5px;color:#5a5a5a">162</div>
<div class="t" style="left:1px;width:9.5px;text-align:center;top:539.37px;font-size:5.4px;letter-spacing:-0.5px;color:#5a5a5a">163</div>
<div class="t" style="left:1px;width:9.5px;text-align:center;top:545.18px;font-size:5.4px;letter-spacing:-0.5px;color:#5a5a5a">164</div>
<div class="t" style="left:1px;width:9.5px;text-align:center;top:550.98px;font-size:5.4px;letter-spacing:-0.5px;color:#5a5a5a">165</div>
<div class="t" style="left:1px;width:9.5px;text-align:center;top:556.78px;font-size:5.4px;letter-spacing:-0.5px;color:#5a5a5a">166</div>
<div class="t" style="left:1px;width:9.5px;text-align:center;top:562.59px;font-size:5.4px;letter-spacing:-0.5px;color:#5a5a5a">167</div>
<div class="t" style="left:1px;width:9.5px;text-align:center;top:568.39px;font-size:5.4px;letter-spacing:-0.5px;color:#5a5a5a">168</div>
<div class="t" style="left:1px;width:9.5px;text-align:center;top:574.20px;font-size:5.4px;letter-spacing:-0.5px;color:#5a5a5a">169</div>
<div class="t" style="left:1px;width:9.5px;text-align:center;top:580.00px;font-size:5.4px;letter-spacing:-0.5px;color:#5a5a5a">170</div>
<div class="t" style="left:1px;width:9.5px;text-align:center;top:585.80px;font-size:5.4px;letter-spacing:-0.5px;color:#5a5a5a">171</div>
<div class="t" style="left:1px;width:9.5px;text-align:center;top:591.61px;font-size:5.4px;letter-spacing:-0.5px;color:#5a5a5a">172</div>
<div class="t" style="left:1px;width:9.5px;text-align:center;top:597.41px;font-size:5.4px;letter-spacing:-0.5px;color:#5a5a5a">173</div>
<div class="t" style="left:1px;width:9.5px;text-align:center;top:603.22px;font-size:5.4px;letter-spacing:-0.5px;color:#5a5a5a">174</div>
<div class="t" style="left:1px;width:9.5px;text-align:center;top:609.02px;font-size:5.4px;letter-spacing:-0.5px;color:#5a5a5a">175</div>
<div class="t" style="left:1px;width:9.5px;text-align:center;top:614.82px;font-size:5.4px;letter-spacing:-0.5px;color:#5a5a5a">176</div>
<div class="t" style="left:1px;width:9.5px;text-align:center;top:620.63px;font-size:5.4px;letter-spacing:-0.5px;color:#5a5a5a">177</div>
<div class="t" style="left:1px;width:9.5px;text-align:center;top:626.43px;font-size:5.4px;letter-spacing:-0.5px;color:#5a5a5a">178</div>
<div class="t" style="left:1px;width:9.5px;text-align:center;top:632.24px;font-size:5.4px;letter-spacing:-0.5px;color:#5a5a5a">179</div>
<div class="t" style="left:1px;width:9.5px;text-align:center;top:638.04px;font-size:5.4px;letter-spacing:-0.5px;color:#5a5a5a">180</div>
<div class="t" style="left:1px;width:9.5px;text-align:center;top:643.84px;font-size:5.4px;letter-spacing:-0.5px;color:#5a5a5a">181</div>
<div class="t" style="left:1px;width:9.5px;text-align:center;top:649.65px;font-size:5.4px;letter-spacing:-0.5px;color:#5a5a5a">182</div>
<div class="t" style="left:1px;width:9.5px;text-align:center;top:655.45px;font-size:5.4px;letter-spacing:-0.5px;color:#5a5a5a">183</div>
<div class="t" style="left:1px;width:9.5px;text-align:center;top:661.26px;font-size:5.4px;letter-spacing:-0.5px;color:#5a5a5a">184</div>
<div class="t" style="left:1px;width:9.5px;text-align:center;top:667.06px;font-size:5.4px;letter-spacing:-0.5px;color:#5a5a5a">185</div>
<div class="t" style="left:1px;width:9.5px;text-align:center;top:672.86px;font-size:5.4px;letter-spacing:-0.5px;color:#5a5a5a">186</div>
<div class="t" style="left:1px;width:9.5px;text-align:center;top:678.67px;font-size:5.4px;letter-spacing:-0.5px;color:#5a5a5a">187</div>
<div class="t" style="left:1px;width:9.5px;text-align:center;top:684.47px;font-size:5.4px;letter-spacing:-0.5px;color:#5a5a5a">188</div>
<div class="t" style="left:1px;width:9.5px;text-align:center;top:690.28px;font-size:5.4px;letter-spacing:-0.5px;color:#5a5a5a">189</div>
<div class="t" style="left:1px;width:9.5px;text-align:center;top:696.08px;font-size:5.4px;letter-spacing:-0.5px;color:#5a5a5a">190</div>
<div class="t" style="left:1px;width:9.5px;text-align:center;top:701.88px;font-size:5.4px;letter-spacing:-0.5px;color:#5a5a5a">191</div>
</div>
<svg width="1000" height="1000" style="clip-path:inset(238px 0 56px 11px)">
<rect x="24.3" y="272.3" width="841.3" height="6.3" fill="#d2d0d1" stroke="#000" stroke-width="1.2"/>
<rect x="31.3" y="278.6" width="827.7" height="150.9" fill="#cbcbcb"/>
<path d="M31.3 279.90H859.0M31.3 283.10H859.0M31.3 285.70H859.0M31.3 288.90H859.0M31.3 291.51H859.0M31.3 294.71H859.0M31.3 297.31H859.0M31.3 300.51H859.0M31.3 303.12H859.0M31.3 306.32H859.0M31.3 308.92H859.0M31.3 312.12H859.0M31.3 314.72H859.0M31.3 317.92H859.0M31.3 320.53H859.0M31.3 323.73H859.0M31.3 326.33H859.0M31.3 329.53H859.0M31.3 332.14H859.0M31.3 335.34H859.0M31.3 337.94H859.0M31.3 341.14H859.0M31.3 343.74H859.0M31.3 346.94H859.0M31.3 349.55H859.0M31.3 352.75H859.0M31.3 355.35H859.0M31.3 358.55H859.0M31.3 361.16H859.0M31.3 364.36H859.0M31.3 366.96H859.0M31.3 370.16H859.0M31.3 372.76H859.0M31.3 375.96H859.0M31.3 378.57H859.0M31.3 381.77H859.0M31.3 384.37H859.0M31.3 387.57H859.0M31.3 390.18H859.0M31.3 393.38H859.0M31.3 395.98H859.0M31.3 399.18H859.0M31.3 401.78H859.0M31.3 404.98H859.0M31.3 407.59H859.0M31.3 410.79H859.0M31.3 413.39H859.0M31.3 416.59H859.0M31.3 419.20H859.0M31.3 422.40H859.0M31.3 425.00H859.0M31.3 428.20H859.0" stroke="#e4e4e4" stroke-width="0.9"/>
<path d="M31.3 278.60H859.0M31.3 284.40H859.0M31.3 290.21H859.0M31.3 296.01H859.0M31.3 301.82H859.0M31.3 307.62H859.0M31.3 313.42H859.0M31.3 319.23H859.0M31.3 325.03H859.0M31.3 330.84H859.0M31.3 336.64H859.0M31.3 342.44H859.0M31.3 348.25H859.0M31.3 354.05H859.0M31.3 359.86H859.0M31.3 365.66H859.0M31.3 371.46H859.0M31.3 377.27H859.0M31.3 383.07H859.0M31.3 388.88H859.0M31.3 394.68H859.0M31.3 400.48H859.0M31.3 406.29H859.0M31.3 412.09H859.0M31.3 417.90H859.0M31.3 423.70H859.0M31.3 429.50H859.0" stroke="#000" stroke-width="1.2"/>
<path d="M31.3 278V430.1 M859.0 278V430.1" stroke="#000" stroke-width="1.2"/>
<rect x="126.5" y="307.6" width="121.90" height="81.20" fill="#dae1f1"/>
<path d="M126.5 307.6H248.4 M126.5 388.8H248.4 M126.5 307.6V388.8 M248.4 307.6V388.8 M187.5 307.6V388.8" stroke="#000" stroke-width="1.1"/>
<rect x="329.6" y="307.6" width="82.00" height="81.20" fill="#dae1f1"/>
<path d="M329.6 307.6H411.6 M329.6 388.8H411.6 M329.6 307.6V388.8 M411.6 307.6V388.8" stroke="#000" stroke-width="1.1"/>
<rect x="513.6" y="307.6" width="120.80" height="81.20" fill="#dae1f1"/>
<path d="M513.6 307.6H634.4 M513.6 388.8H634.4 M513.6 307.6V388.8 M574.4 307.6V388.8" stroke="#000" stroke-width="1.1"/>
<rect x="764.4" y="307.6" width="74.00" height="81.20" fill="#dae1f1"/>
<path d="M764.4 307.6H838.4 M764.4 388.8H838.4 M764.4 307.6V388.8 M838.4 307.6V388.8" stroke="#000" stroke-width="1.1"/>
<rect x="24.3" y="476.4" width="7" height="6" fill="#d2d0d1" stroke="#000" stroke-width="1.2"/>
<rect x="859" y="476.4" width="6.5" height="6" fill="#d2d0d1" stroke="#000" stroke-width="1.2"/>
<rect x="31.3" y="476.4" width="827.7" height="156.60000000000002" fill="#cbcbcb"/>
<path d="M32.70 476.4V633.0M36.70 476.4V633.0M39.48 476.4V633.0M43.48 476.4V633.0M46.27 476.4V633.0M50.27 476.4V633.0M53.05 476.4V633.0M57.05 476.4V633.0M59.84 476.4V633.0M63.84 476.4V633.0M66.62 476.4V633.0M70.62 476.4V633.0M73.40 476.4V633.0M77.40 476.4V633.0M80.19 476.4V633.0M84.19 476.4V633.0M86.97 476.4V633.0M90.97 476.4V633.0M93.76 476.4V633.0M97.76 476.4V633.0M100.54 476.4V633.0M104.54 476.4V633.0M107.32 476.4V633.0M111.32 476.4V633.0M114.11 476.4V633.0M118.11 476.4V633.0M120.89 476.4V633.0M124.89 476.4V633.0M127.68 476.4V633.0M131.68 476.4V633.0M134.46 476.4V633.0M138.46 476.4V633.0M141.24 476.4V633.0M145.24 476.4V633.0M148.03 476.4V633.0M152.03 476.4V633.0M154.81 476.4V633.0M158.81 476.4V633.0M161.60 476.4V633.0M165.60 476.4V633.0M168.38 476.4V633.0M172.38 476.4V633.0M175.16 476.4V633.0M179.16 476.4V633.0M181.95 476.4V633.0M185.95 476.4V633.0M188.73 476.4V633.0M192.73 476.4V633.0M195.52 476.4V633.0M199.52 476.4V633.0M202.30 476.4V633.0M206.30 476.4V633.0M209.08 476.4V633.0M213.08 476.4V633.0M215.87 476.4V633.0M219.87 476.4V633.0M222.65 476.4V633.0M226.65 476.4V633.0M229.44 476.4V633.0M233.44 476.4V633.0M236.22 476.4V633.0M240.22 476.4V633.0M243.00 476.4V633.0M247.00 476.4V633.0M249.79 476.4V633.0M253.79 476.4V633.0M256.57 476.4V633.0M260.57 476.4V633.0M263.36 476.4V633.0M267.36 476.4V633.0M270.14 476.4V633.0M274.14 476.4V633.0M276.92 476.4V633.0M280.92 476.4V633.0M283.71 476.4V633.0M287.71 476.4V633.0M290.49 476.4V633.0M294.49 476.4V633.0M297.28 476.4V633.0M301.28 476.4V633.0M304.06 476.4V633.0M308.06 476.4V633.0M310.84 476.4V633.0M314.84 476.4V633.0M317.63 476.4V633.0M321.63 476.4V633.0M324.41 476.4V633.0M328.41 476.4V633.0M331.20 476.4V633.0M335.20 476.4V633.0M337.98 476.4V633.0M341.98 476.4V633.0M344.76 476.4V633.0M348.76 476.4V633.0M351.55 476.4V633.0M355.55 476.4V633.0M358.33 476.4V633.0M362.33 476.4V633.0M365.12 476.4V633.0M369.12 476.4V633.0M371.90 476.4V633.0M375.90 476.4V633.0M378.68 476.4V633.0M382.68 476.4V633.0M385.47 476.4V633.0M389.47 476.4V633.0M392.25 476.4V633.0M396.25 476.4V633.0M399.04 476.4V633.0M403.04 476.4V633.0M405.82 476.4V633.0M409.82 476.4V633.0M412.60 476.4V633.0M416.60 476.4V633.0M419.39 476.4V633.0M423.39 476.4V633.0M426.17 476.4V633.0M430.17 476.4V633.0M432.96 476.4V633.0M436.96 476.4V633.0M439.74 476.4V633.0M443.74 476.4V633.0M446.52 476.4V633.0M450.52 476.4V633.0M453.31 476.4V633.0M457.31 476.4V633.0M460.09 476.4V633.0M464.09 476.4V633.0M466.88 476.4V633.0M470.88 476.4V633.0M473.66 476.4V633.0M477.66 476.4V633.0M480.44 476.4V633.0M484.44 476.4V633.0M487.23 476.4V633.0M491.23 476.4V633.0M494.01 476.4V633.0M498.01 476.4V633.0M500.80 476.4V633.0M504.80 476.4V633.0M507.58 476.4V633.0M511.58 476.4V633.0M514.36 476.4V633.0M518.36 476.4V633.0M521.15 476.4V633.0M525.15 476.4V633.0M527.93 476.4V633.0M531.93 476.4V633.0M534.72 476.4V633.0M538.72 476.4V633.0M541.50 476.4V633.0M545.50 476.4V633.0M548.28 476.4V633.0M552.28 476.4V633.0M555.07 476.4V633.0M559.07 476.4V633.0M561.85 476.4V633.0M565.85 476.4V633.0M568.64 476.4V633.0M572.64 476.4V633.0M575.42 476.4V633.0M579.42 476.4V633.0M582.20 476.4V633.0M586.20 476.4V633.0M588.99 476.4V633.0M592.99 476.4V633.0M595.77 476.4V633.0M599.77 476.4V633.0M602.56 476.4V633.0M606.56 476.4V633.0M609.34 476.4V633.0M613.34 476.4V633.0M616.12 476.4V633.0M620.12 476.4V633.0M622.91 476.4V633.0M626.91 476.4V633.0M629.69 476.4V633.0M633.69 476.4V633.0M636.48 476.4V633.0M640.48 476.4V633.0M643.26 476.4V633.0M647.26 476.4V633.0M650.04 476.4V633.0M654.04 476.4V633.0M656.83 476.4V633.0M660.83 476.4V633.0M663.61 476.4V633.0M667.61 476.4V633.0M670.40 476.4V633.0M674.40 476.4V633.0M677.18 476.4V633.0M681.18 476.4V633.0M683.96 476.4V633.0M687.96 476.4V633.0M690.75 476.4V633.0M694.75 476.4V633.0M697.53 476.4V633.0M701.53 476.4V633.0M704.32 476.4V633.0M708.32 476.4V633.0M711.10 476.4V633.0M715.10 476.4V633.0M717.88 476.4V633.0M721.88 476.4V633.0M724.67 476.4V633.0M728.67 476.4V633.0M731.45 476.4V633.0M735.45 476.4V633.0M738.24 476.4V633.0M742.24 476.4V633.0M745.02 476.4V633.0M749.02 476.4V633.0M751.80 476.4V633.0M755.80 476.4V633.0M758.59 476.4V633.0M762.59 476.4V633.0M765.37 476.4V633.0M769.37 476.4V633.0M772.16 476.4V633.0M776.16 476.4V633.0M778.94 476.4V633.0M782.94 476.4V633.0M785.72 476.4V633.0M789.72 476.4V633.0M792.51 476.4V633.0M796.51 476.4V633.0M799.29 476.4V633.0M803.29 476.4V633.0M806.08 476.4V633.0M810.08 476.4V633.0M812.86 476.4V633.0M816.86 476.4V633.0M819.64 476.4V633.0M823.64 476.4V633.0M826.43 476.4V633.0M830.43 476.4V633.0M833.21 476.4V633.0M837.21 476.4V633.0M840.00 476.4V633.0M844.00 476.4V633.0M846.78 476.4V633.0M850.78 476.4V633.0M853.56 476.4V633.0M857.56 476.4V633.0" stroke="#e2e2e2" stroke-width="0.9"/>
<path d="M31.30 476.4V633.0M38.08 476.4V633.0M44.87 476.4V633.0M51.65 476.4V633.0M58.44 476.4V633.0M65.22 476.4V633.0M72.00 476.4V633.0M78.79 476.4V633.0M85.57 476.4V633.0M92.36 476.4V633.0M99.14 476.4V633.0M105.92 476.4V633.0M112.71 476.4V633.0M119.49 476.4V633.0M126.28 476.4V633.0M133.06 476.4V633.0M139.84 476.4V633.0M146.63 476.4V633.0M153.41 476.4V633.0M160.20 476.4V633.0M166.98 476.4V633.0M173.76 476.4V633.0M180.55 476.4V633.0M187.33 476.4V633.0M194.12 476.4V633.0M200.90 476.4V633.0M207.68 476.4V633.0M214.47 476.4V633.0M221.25 476.4V633.0M228.04 476.4V633.0M234.82 476.4V633.0M241.60 476.4V633.0M248.39 476.4V633.0M255.17 476.4V633.0M261.96 476.4V633.0M268.74 476.4V633.0M275.52 476.4V633.0M282.31 476.4V633.0M289.09 476.4V633.0M295.88 476.4V633.0M302.66 476.4V633.0M309.44 476.4V633.0M316.23 476.4V633.0M323.01 476.4V633.0M329.80 476.4V633.0M336.58 476.4V633.0M343.36 476.4V633.0M350.15 476.4V633.0M356.93 476.4V633.0M363.72 476.4V633.0M370.50 476.4V633.0M377.28 476.4V633.0M384.07 476.4V633.0M390.85 476.4V633.0M397.64 476.4V633.0M404.42 476.4V633.0M411.20 476.4V633.0M417.99 476.4V633.0M424.77 476.4V633.0M431.56 476.4V633.0M438.34 476.4V633.0M445.12 476.4V633.0M451.91 476.4V633.0M458.69 476.4V633.0M465.48 476.4V633.0M472.26 476.4V633.0M479.04 476.4V633.0M485.83 476.4V633.0M492.61 476.4V633.0M499.40 476.4V633.0M506.18 476.4V633.0M512.96 476.4V633.0M519.75 476.4V633.0M526.53 476.4V633.0M533.32 476.4V633.0M540.10 476.4V633.0M546.88 476.4V633.0M553.67 476.4V633.0M560.45 476.4V633.0M567.24 476.4V633.0M574.02 476.4V633.0M580.80 476.4V633.0M587.59 476.4V633.0M594.37 476.4V633.0M601.16 476.4V633.0M607.94 476.4V633.0M614.72 476.4V633.0M621.51 476.4V633.0M628.29 476.4V633.0M635.08 476.4V633.0M641.86 476.4V633.0M648.64 476.4V633.0M655.43 476.4V633.0M662.21 476.4V633.0M669.00 476.4V633.0M675.78 476.4V633.0M682.56 476.4V633.0M689.35 476.4V633.0M696.13 476.4V633.0M702.92 476.4V633.0M709.70 476.4V633.0M716.48 476.4V633.0M723.27 476.4V633.0M730.05 476.4V633.0M736.84 476.4V633.0M743.62 476.4V633.0M750.40 476.4V633.0M757.19 476.4V633.0M763.97 476.4V633.0M770.76 476.4V633.0M777.54 476.4V633.0M784.32 476.4V633.0M791.11 476.4V633.0M797.89 476.4V633.0M804.68 476.4V633.0M811.46 476.4V633.0M818.24 476.4V633.0M825.03 476.4V633.0M831.81 476.4V633.0M838.60 476.4V633.0M845.38 476.4V633.0M852.16 476.4V633.0M858.95 476.4V633.0" stroke="#000" stroke-width="1.2"/>
<path d="M31.3 476.4H859.0 M31.3 633.0H859.0" stroke="#000" stroke-width="1.2"/>
<rect x="173.8" y="516.8" width="61.00" height="116.20" fill="#fff"/>
<rect x="180.3" y="521.8" width="47.70" height="105.00" fill="#deebf7"/>
<path d="M173.8 516.8H234.8 M173.8 633.0H234.8 M173.8 516.8V633.0 M234.8 516.8V633.0 " stroke="#000" stroke-width="1.1"/>
<rect x="445.7" y="516.7" width="46.20" height="69.50" fill="#fff"/>
<rect x="451.5" y="522" width="33.80" height="58.00" fill="#dae1f1"/>
<path d="M445.7 516.7H491.9 M445.7 586.2H491.9 M445.7 516.7V586.2 M491.9 516.7V586.2 " stroke="#000" stroke-width="1.1"/>
<rect x="547.7" y="516.7" width="39.10" height="34.80" fill="#fff"/>
<rect x="553" y="522" width="27.20" height="23.00" fill="#dae1f1"/>
<path d="M547.7 551.5H586.8 M547.7 516.7V551.5 M586.8 516.7V551.5 " stroke="#000" stroke-width="1.1"/>
<rect x="648.5" y="516.6" width="94.70" height="116.40" fill="#fff"/>
<rect x="655.2" y="522.3" width="33.60" height="104.30" fill="#dae1f1"/>
<rect x="702.9" y="522.3" width="33.10" height="104.30" fill="#dae1f1"/>
<path d="M648.5 516.6H743.2 M648.5 633.0H743.2 M648.5 516.6V633.0 M743.2 516.6V633.0 M696.3 516.6V633.0 " stroke="#000" stroke-width="1.1"/>
<path d="M31.3 656.2H859.5V871.4H628.1V801.9H31.3Z" fill="#f4b183"/>
<rect x="31.3" y="656.2" width="53.9" height="145.7" fill="#00b050"/>
<rect x="85.2" y="656.2" width="41.4" height="145.7" fill="#ffff00"/>
<path d="M31.3 656.2H859 M31.3 656.2V801.9 M85.2 656.2V801.9 M126.6 656.2V801.9" stroke="#000" stroke-width="1.1"/>
<rect x="234.4" y="656.2" width="142.6" height="22.60" fill="#843c0c"/>
<rect x="234.4" y="690.9" width="142.6" height="40.10" fill="#843c0c"/>
<rect x="234.4" y="743.1" width="142.6" height="22.90" fill="#843c0c"/>
<path d="M234.9 656.2V674 M234.4 743.6H344 M234.9 743.1V762" stroke="#111" stroke-width="1"/>
<rect x="344" y="655.4" width="33" height="2" fill="#843c0c"/>
<rect x="513" y="656.2" width="81.5" height="104.9" fill="#b4c7e7"/>
<path d="M513 656.2V761.1H594.5V656.2" fill="none" stroke="#000" stroke-width="1.1"/>
<path d="M709.85 702.32 L804.83 702.32 L804.83 708.12 L811.61 708.12 L811.61 713.93 L818.40 713.93 L818.40 719.73 L825.18 719.73 L825.18 725.54 L831.96 725.54 L831.96 731.34 L838.75 731.34 L838.75 737.14 L845.53 737.14 L845.53 742.95 L852.32 742.95 L852.32 748.75 L859.10 748.75 L859.10 824.20 L852.32 824.20 L852.32 830.01 L845.53 830.01 L845.53 835.81 L838.75 835.81 L838.75 841.62 L831.96 841.62 L831.96 847.42 L825.18 847.42 L825.18 853.22 L818.40 853.22 L818.40 859.03 L811.61 859.03 L811.61 864.83 L804.83 864.83 L804.83 870.64 L709.85 870.64 L709.85 864.83 L703.07 864.83 L703.07 859.03 L696.28 859.03 L696.28 853.22 L689.50 853.22 L689.50 847.42 L682.72 847.42 L682.72 841.62 L675.93 841.62 L675.93 835.81 L669.15 835.81 L669.15 830.01 L662.36 830.01 L662.36 824.20 L655.58 824.20 L655.58 748.75 L662.36 748.75 L662.36 742.95 L669.15 742.95 L669.15 737.14 L675.93 737.14 L675.93 731.34 L682.72 731.34 L682.72 725.54 L689.50 725.54 L689.50 719.73 L696.28 719.73 L696.28 713.93 L703.07 713.93 L703.07 708.12 L709.85 708.12 L709.85 702.32Z" fill="#ffff00"/>
<path d="M655.6 754.3 L716.2 702.3 M797.8 702.3 L859 754.6 M655.6 818.4 L716 870.8 M797.8 870.8 L859 818.4" stroke="#111" stroke-width="1"/>
<rect x="126.4" y="825.2" width="502.3" height="5.7" fill="#fff" stroke="#404040" stroke-width="1.1"/>
<rect x="24.4" y="795.4" width="7.4" height="6.4" fill="none" stroke="#217346" stroke-width="2"/>
<rect x="29.0" y="798.4" width="5.0" height="5.2" fill="#fff"/>
<rect x="29.6" y="799.0" width="4.2" height="4.6" fill="#217346"/>
<path d="M886.70 346.64 A37.15 23.85 0 1 1 900.08 349.65 L889.70 354.90Z" fill="#4472c4" stroke="#2f528f" stroke-width="0.7"/>
<path d="M209.29 581.39 A41.65 20.00 0 1 1 224.36 583.83 L212.00 589.50Z" fill="#4472c4" stroke="#2f528f" stroke-width="0.7"/>
<path d="M719.95 578.34 A45.05 25.05 0 1 1 736.29 581.31 L723.20 588.20Z" fill="#4472c4" stroke="#2f528f" stroke-width="0.7"/>
<path d="M111.71 695.14 A48.80 22.50 0 1 1 129.35 697.90 L115.40 703.50Z" fill="#4472c4" stroke="#2f528f" stroke-width="0.7"/>
<path d="M66.98 751.40 A42.50 18.70 0 1 1 82.32 753.72 L70.40 758.00Z" fill="#4472c4" stroke="#2f528f" stroke-width="0.7"/>
<path d="M556.18 720.77 A76.20 34.20 0 1 1 583.81 724.83 L562.10 733.60Z" fill="#4472c4" stroke="#2f528f" stroke-width="0.7"/>
<path d="M853.69 695.00 A49.20 22.20 0 1 1 871.54 697.63 L857.20 703.80Z" fill="#4472c4" stroke="#2f528f" stroke-width="0.7"/>
<path d="M742.40 747.34 A48.95 15.25 0 1 1 760.05 749.25 L746.00 753.00Z" fill="#4472c4" stroke="#2f528f" stroke-width="0.7"/>
<path d="M434.32 820.59 A56.30 21.00 0 1 1 454.77 823.05 L438.00 829.40Z" fill="#4472c4" stroke="#2f528f" stroke-width="0.7"/>
</svg>
<div class="t" style="left:888.80px;top:315.02px;font-size:8.6px;color:#ffffff;font-weight:400;transform:scaleX(1.0344);transform-origin:0 0;-webkit-text-stroke:0.25px #fff;">pohled z</div>
<div class="t" style="left:896.00px;top:325.82px;font-size:8.6px;color:#ffffff;font-weight:400;transform:scaleX(1.0059);transform-origin:0 0;-webkit-text-stroke:0.25px #fff;">ulice</div>
<div class="t" style="left:215.50px;top:554.32px;font-size:8.6px;color:#ffffff;font-weight:400;transform:scaleX(1.0221);transform-origin:0 0;-webkit-text-stroke:0.25px #fff;">dveře z</div>
<div class="t" style="left:213.50px;top:565.82px;font-size:8.6px;color:#ffffff;font-weight:400;transform:scaleX(1.0239);transform-origin:0 0;-webkit-text-stroke:0.25px #fff;">kuchyně</div>
<div class="t" style="left:714.90px;top:547.82px;font-size:8.6px;color:#ffffff;font-weight:400;transform:scaleX(1.0064);transform-origin:0 0;-webkit-text-stroke:0.25px #fff;">dveře z ložice</div>
<div class="t" style="left:106.00px;top:664.52px;font-size:8.6px;color:#ffffff;font-weight:400;transform:scaleX(1.0236);transform-origin:0 0;-webkit-text-stroke:0.25px #fff;">krb s udírnou a</div>
<div class="t" style="left:114.00px;top:675.82px;font-size:8.6px;color:#ffffff;font-weight:400;transform:scaleX(1.0612);transform-origin:0 0;-webkit-text-stroke:0.25px #fff;">grilováním</div>
<div class="t" style="left:65.00px;top:727.62px;font-size:8.6px;color:#ffffff;font-weight:400;transform:scaleX(1.0222);transform-origin:0 0;-webkit-text-stroke:0.25px #fff;">kytky jakési</div>
<div class="t" style="left:548.20px;top:677.62px;font-size:8.6px;color:#ffffff;font-weight:400;transform:scaleX(1.0100);transform-origin:0 0;-webkit-text-stroke:0.25px #fff;">vyvýšená vodní nádrž s</div>
<div class="t" style="left:549.50px;top:688.42px;font-size:8.6px;color:#ffffff;font-weight:400;transform:scaleX(1.0422);transform-origin:0 0;-webkit-text-stroke:0.25px #fff;">kytkama okolo i uvnitř</div>
<div class="t" style="left:847.60px;top:668.12px;font-size:8.6px;color:#ffffff;font-weight:400;transform:scaleX(1.0398);transform-origin:0 0;-webkit-text-stroke:0.25px #fff;">terasa půdorys</div>
<div class="t" style="left:744.40px;top:729.82px;font-size:8.6px;color:#ffffff;font-weight:400;transform:scaleX(1.0582);transform-origin:0 0;-webkit-text-stroke:0.25px #fff;">trampolína</div>
<div class="t" style="left:433.20px;top:792.82px;font-size:8.6px;color:#ffffff;font-weight:400;transform:scaleX(1.0441);transform-origin:0 0;-webkit-text-stroke:0.25px #fff;">pergola v této</div>
<div class="t" style="left:451.40px;top:803.42px;font-size:8.6px;color:#ffffff;font-weight:400;transform:scaleX(0.9659);transform-origin:0 0;-webkit-text-stroke:0.25px #fff;">šířce</div>
<div class="r" style="left:0.00px;top:944.40px;width:1000.00px;height:27.80px;background:#e6e6e6;"></div>
<div class="r" style="left:0.00px;top:944.00px;width:1000.00px;height:1.00px;background:#c6c6c6;"></div>
<div class="r" style="left:0.00px;top:971.80px;width:1000.00px;height:1.00px;background:#d0d0d0;"></div>
<div class="r" style="left:0.00px;top:972.80px;width:1000.00px;height:23.20px;background:#f1f1f1;"></div>
<div class="r" style="left:0.00px;top:996.00px;width:1000.00px;height:4.00px;background:#1a1a1a;"></div>
<div class="r" style="left:296.60px;top:944.60px;width:85.20px;height:24.00px;background:#ffffff;"></div>
<div class="r" style="left:296.60px;top:966.80px;width:85.20px;height:2.00px;background:#217346;"></div>
<div class="r" style="left:100.20px;top:948.60px;width:1.10px;height:19.20px;background:#a8a8a8;"></div>
<div class="r" style="left:167.00px;top:948.60px;width:1.10px;height:19.20px;background:#a8a8a8;"></div>
<div class="r" style="left:457.60px;top:948.60px;width:1.10px;height:19.20px;background:#a8a8a8;"></div>
<div class="r" style="left:516.80px;top:948.60px;width:1.10px;height:19.20px;background:#a8a8a8;"></div>
<svg width="1000" height="1000">
<path d="M32 954l-6 4 6 4z M54.6 954l6 4-6 4z" fill="#b8b8b8"/>
<circle cx="559" cy="958" r="9.2" fill="none" stroke="#6a6a6a" stroke-width="1.4"/><path d="M553.8 958h10.4 M559 952.8v10.4" stroke="#5a5a5a" stroke-width="1.9"/>
</svg>
<div class="t" style="left:112.00px;top:945.83px;font-size:16.1px;color:#444;font-weight:400;">var 2</div>
<div class="t" style="left:180.80px;top:945.47px;font-size:16.5px;color:#444;font-weight:400;">rozměry oken</div>
<div class="t" style="left:308.20px;top:946.03px;font-size:16.1px;color:#217346;font-weight:700;">zahrada</div>
<div class="t" style="left:393.60px;top:945.83px;font-size:16.1px;color:#444;font-weight:400;">situace</div>
<div class="t" style="left:470.40px;top:946.82px;font-size:15.0px;color:#444;font-weight:400;">List1</div>
<div class="t" style="left:6.05px;top:977.16px;font-size:13.3px;color:#444;font-weight:400;transform:scaleX(0.9511);transform-origin:0 0;">Připraven</div>
</body></html>
